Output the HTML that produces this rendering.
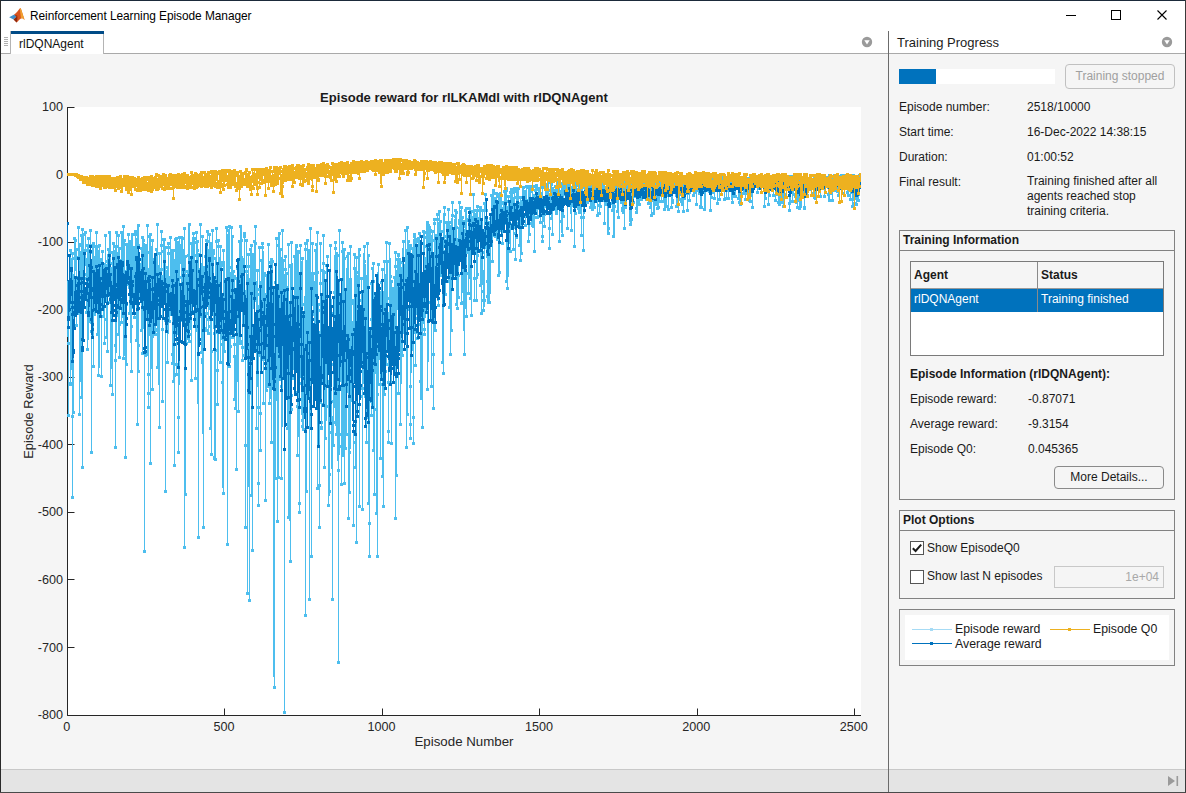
<!DOCTYPE html>
<html lang="en">
<head>
<meta charset="utf-8">
<title>Reinforcement Learning Episode Manager</title>
<style>
html,body{margin:0;padding:0;}
body{width:1186px;height:793px;overflow:hidden;background:#f5f5f5;font-family:"Liberation Sans",Arial,sans-serif;font-size:12px;color:#1a1a1a;position:relative;}
.abs{position:absolute;}
#win{position:absolute;left:0;top:0;width:1186px;height:793px;overflow:hidden;background:#f5f5f5;}
#titlebar{left:1px;top:1px;width:1184px;height:30px;background:#fff;}
#title{left:30px;top:9px;font-size:11.9px;color:#000;white-space:nowrap;letter-spacing:-0.05px;}
#tabstrip{left:1px;top:31px;width:1184px;height:22px;background:#fff;}
#tabline{left:1px;top:53px;width:1184px;height:1px;background:#a9a9a9;}
#tab{left:10px;top:31px;width:94px;height:23px;background:#fff;border-left:1px solid #b4b4b4;border-right:1px solid #b4b4b4;box-sizing:border-box;}
#tabtop{left:11px;top:31px;width:93px;height:3px;background:#004b87;}
#tabtxt{left:19px;top:37px;font-size:12px;color:#111;white-space:nowrap;}
#vsep{left:888px;top:31px;width:1px;height:762px;background:#6b6b6b;}
#tp{left:897px;top:35px;font-size:13px;color:#1c1c1c;white-space:nowrap;}
#statusL{left:1px;top:769px;width:887px;height:23px;background:#e4e4e4;border-top:1px solid #c8c8c8;box-sizing:border-box;}
#statusR{left:889px;top:769px;width:296px;height:23px;background:#e4e4e4;border-top:1px solid #c8c8c8;box-sizing:border-box;}
.lbl{position:absolute;font-size:12px;white-space:nowrap;color:#1a1a1a;}
.b{font-weight:bold;}
.panel{position:absolute;border:1px solid #828282;box-sizing:border-box;}
.phead{position:absolute;left:0;top:0;right:0;height:20px;border-bottom:1px solid #828282;box-sizing:border-box;}
.btn{position:absolute;border:1px solid #8a8a8a;border-radius:4px;box-sizing:border-box;text-align:center;font-size:12px;background:#f5f5f5;}
.cb{position:absolute;width:14px;height:14px;border:1px solid #555;background:#fff;box-sizing:border-box;}
</style>
</head>
<body>
<div id="win">
  <!-- title bar -->
  <div id="titlebar" class="abs"></div>
  <svg class="abs" style="left:8px;top:7px" width="20" height="18" viewBox="0 0 20 18">
    <path d="M1.2 10.2 L6.2 7.6 L8.6 9.8 L5.6 12.6 Z" fill="#3f8ecb"/>
    <path d="M6.2 7.6 C8.4 6.2 10.2 3.4 11.8 1.6 C12.4 1.0 12.8 1.2 13.2 2.4 L16.6 13.0 C15.2 11.6 14.2 11.0 13.0 11.6 C11.4 12.4 10.2 14.4 8.6 15.6 L5.6 12.6 L8.6 9.8 Z" fill="#d9541e"/>
    <path d="M11.8 1.6 C12.4 1.0 12.8 1.2 13.2 2.4 L16.6 13.0 C15.2 11.6 14.2 11.0 13.0 11.6 C12.6 8.6 12.2 4.8 11.8 1.6 Z" fill="#f0a030"/>
    <path d="M6.2 7.6 L8.6 9.8 L5.6 12.6 L8.6 15.6 C9.4 13.4 9.6 11.0 9.2 8.4 C8.2 8.6 7.2 8.2 6.2 7.6Z" fill="#8b2a12"/>
  </svg>
  <div id="title" class="abs">Reinforcement Learning Episode Manager</div>
  <!-- window controls -->
  <svg class="abs" style="left:1040px;top:0" width="146" height="31" viewBox="0 0 146 31">
    <path d="M26 15.5 H36" stroke="#000" stroke-width="1" fill="none"/>
    <rect x="71.500" y="10.500" width="9" height="9" stroke="#000" stroke-width="1" fill="none"/>
    <path d="M117.500 10.500 L126.500 19.500 M126.500 10.500 L117.500 19.500" stroke="#000" stroke-width="1.100" fill="none"/>
  </svg>

  <!-- tab strip -->
  <div id="tabstrip" class="abs"></div>
  <div id="tabline" class="abs"></div>
  <div id="tab" class="abs"></div>
  <div id="tabtop" class="abs"></div>
  <div id="tabtxt" class="abs">rlDQNAgent</div>
  <svg class="abs" style="left:3px;top:36px" width="6" height="12" viewBox="0 0 6 12">
    <path d="M1 1.500H5M1 3.500H5M1 5.500H5M1 7.500H5M1 9.500H5" stroke="#b0b0b0" stroke-width="1"/>
  </svg>
  <svg class="abs" style="left:861px;top:36px" width="12" height="12" viewBox="0 0 12 12">
    <circle cx="6" cy="6" r="5.200" fill="#9a9a9a"/><path d="M3.300 4.300 H8.700 L6 8.600 Z" fill="#fff"/>
  </svg>
  <svg class="abs" style="left:1161px;top:36px" width="12" height="12" viewBox="0 0 12 12">
    <circle cx="6" cy="6" r="5.200" fill="#9a9a9a"/><path d="M3.300 4.300 H8.700 L6 8.600 Z" fill="#fff"/>
  </svg>
  <div id="tp" class="abs">Training Progress</div>
  <div id="vsep" class="abs"></div>

  <!-- status bars -->
  <div id="statusL" class="abs"></div>
  <div id="statusR" class="abs"></div>
  <svg class="abs" style="left:1166px;top:774px" width="14" height="14" viewBox="0 0 14 14">
    <path d="M2 2 L9 7 L2 12 Z" fill="#9a9a9a"/><rect x="10.500" y="2" width="1.600" height="10" fill="#9a9a9a"/>
  </svg>

  <!-- chart -->
  <svg class="abs" style="left:0;top:54px" width="888" height="715" viewBox="0 54 888 715" font-family="Liberation Sans, Arial, sans-serif">
<rect x="67" y="107" width="794" height="609" fill="#fff"/>
<path d="M67.5 107 V715.5 H861" stroke="#262626" stroke-width="1" fill="none"/>
<path d="M67.5 107.5 h7 M67.5 174.5 h7 M67.5 242.5 h7 M67.5 309.5 h7 M67.5 377.5 h7 M67.5 444.5 h7 M67.5 512.5 h7 M67.5 579.5 h7 M67.5 647.5 h7 M67.5 715.5 h7 M67.5 715.5 v-7 M224.5 715.5 v-7 M382.5 715.5 v-7 M539.5 715.5 v-7 M697.5 715.5 v-7 M854.5 715.5 v-7" stroke="#262626" stroke-width="1" fill="none"/>
<g fill="none" stroke-width="1" shape-rendering="crispEdges">
<path id="episode-reward" stroke="#4dbeee" d="M67.5 222v115M67.5 342v3M67.5 414v3M68.5 222v3M68.5 283v3M68.5 288v129M69.5 249v3M69.5 283v38M69.5 342v3M69.5 382v4M69.5 414v3M70.5 249v137M71.5 249v6M71.5 258v112M71.5 382v4M71.5 415v3M71.5 496v3M72.5 252v247M73.5 237v3M73.5 252v3M73.5 257v3M73.5 274v140M73.5 415v3M73.5 496v3M74.5 237v63M74.5 351v3M74.5 411v3M75.5 237v34M75.5 287v3M75.5 296v3M75.5 324v3M76.5 239v3M76.5 248v79M77.5 226v3M77.5 248v3M77.5 256v3M77.5 276v39M77.5 324v3M78.5 226v71M78.5 312v3M78.5 413v3M79.5 226v3M79.5 243v173M80.5 234v3M80.5 243v4M80.5 251v131M80.5 396v3M80.5 413v3M81.5 228v3M81.5 234v165M81.5 466v3M82.5 228v241M83.5 228v3M83.5 233v71M83.5 466v3M84.5 231v5M84.5 249v42M84.5 301v3M85.5 231v35M85.5 273v3M85.5 277v3M85.5 282v3M85.5 311v3M86.5 231v3M86.5 244v3M86.5 249v3M86.5 258v56M86.5 348v3M87.5 237v3M87.5 244v107M88.5 237v103M88.5 348v3M89.5 229v3M89.5 237v3M89.5 244v3M89.5 249v74M90.5 229v95M90.5 330v3M90.5 451v3M91.5 229v3M91.5 244v3M91.5 250v4M91.5 287v167M92.5 242v91M92.5 365v3M92.5 451v3M93.5 242v126M94.5 242v6M94.5 256v60M94.5 365v3M95.5 231v3M95.5 245v61M95.5 313v3M96.5 231v45M96.5 302v3M96.5 333v3M97.5 231v3M97.5 245v91M97.5 374v3M98.5 244v4M98.5 250v127M99.5 244v124M99.5 374v3M100.5 244v3M100.5 258v54M100.5 375v3M101.5 250v3M101.5 258v120M102.5 250v46M102.5 315v3M102.5 375v3M103.5 250v3M103.5 263v55M103.5 342v3M104.5 234v3M104.5 263v82M105.5 234v67M105.5 318v3M105.5 336v3M105.5 342v3M106.5 234v3M106.5 260v3M106.5 264v5M106.5 270v69M106.5 350v3M107.5 248v3M107.5 254v99M108.5 231v3M108.5 248v33M108.5 301v3M108.5 350v3M109.5 231v73M109.5 384v3M110.5 231v156M111.5 251v3M111.5 262v3M111.5 267v102M111.5 384v3M111.5 393v3M112.5 242v3M112.5 251v145M113.5 242v46M113.5 393v3M114.5 242v6M114.5 250v38M114.5 344v3M114.5 359v3M114.5 446v3M115.5 231v3M115.5 245v204M116.5 231v122M116.5 359v3M116.5 446v3M117.5 231v6M117.5 245v3M117.5 252v65M117.5 333v3M118.5 234v102M118.5 356v3M119.5 234v3M119.5 247v112M120.5 231v3M120.5 247v3M120.5 259v30M120.5 321v5M120.5 356v3M121.5 231v93M122.5 225v3M122.5 231v87M122.5 321v3M122.5 357v3M123.5 225v135M124.5 225v3M124.5 239v117M124.5 357v3M124.5 456v3M125.5 239v3M125.5 243v3M125.5 270v3M125.5 283v3M125.5 287v172M126.5 243v123M126.5 456v3M127.5 233v3M127.5 243v43M127.5 303v3M127.5 363v3M128.5 233v56M128.5 312v3M129.5 233v3M129.5 240v75M130.5 240v103M130.5 370v3M131.5 233v140M132.5 233v76M132.5 325v3M132.5 370v3M133.5 233v3M133.5 246v50M133.5 306v3M133.5 316v3M134.5 230v6M134.5 246v73M135.5 230v49M135.5 284v3M135.5 316v3M135.5 339v3M136.5 230v6M136.5 238v104M136.5 423v3M137.5 224v202M138.5 224v149M138.5 423v3M139.5 224v3M139.5 244v3M139.5 252v48M139.5 344v3M139.5 370v3M140.5 247v3M140.5 263v24M140.5 294v6M140.5 329v3M141.5 236v3M141.5 247v85M141.5 352v3M142.5 236v119M143.5 236v93M143.5 352v3M143.5 550v3M144.5 239v3M144.5 243v310M145.5 244v113M145.5 550v3M146.5 224v3M146.5 244v76M146.5 353v4M147.5 224v132M147.5 373v3M147.5 392v3M147.5 406v3M148.5 224v3M148.5 235v3M148.5 251v3M148.5 268v141M149.5 233v103M149.5 373v3M149.5 392v3M149.5 406v3M149.5 462v3M150.5 233v232M151.5 233v3M151.5 239v3M151.5 246v123M151.5 388v3M151.5 462v3M152.5 239v152M153.5 239v3M153.5 258v80M153.5 388v3M154.5 258v6M154.5 272v64M155.5 248v3M155.5 261v75M156.5 223v3M156.5 248v74M156.5 328v4M156.5 333v3M156.5 366v3M157.5 223v146M158.5 223v3M158.5 252v3M158.5 265v120M158.5 426v3M159.5 252v177M160.5 230v3M160.5 244v3M160.5 252v3M160.5 268v42M160.5 426v3M161.5 230v67M161.5 305v3M161.5 328v3M161.5 400v3M162.5 230v3M162.5 238v3M162.5 244v3M162.5 250v3M162.5 268v3M162.5 275v128M163.5 238v80M163.5 328v3M163.5 400v3M164.5 238v60M164.5 319v3M164.5 490v3M165.5 238v3M165.5 246v247M166.5 246v3M166.5 266v3M166.5 270v39M166.5 319v3M166.5 361v3M166.5 490v3M167.5 242v3M167.5 246v3M167.5 252v3M167.5 266v98M168.5 242v92M168.5 361v3M169.5 236v3M169.5 242v3M169.5 246v3M169.5 252v3M169.5 276v47M170.5 236v80M170.5 320v3M171.5 236v3M171.5 249v61M171.5 313v3M171.5 353v3M171.5 362v3M172.5 249v116M172.5 380v3M173.5 249v134M173.5 464v3M174.5 238v3M174.5 249v3M174.5 259v208M175.5 237v100M175.5 363v3M175.5 373v4M175.5 464v3M176.5 237v139M177.5 237v3M177.5 241v94M177.5 363v3M177.5 373v3M177.5 416v3M177.5 451v3M178.5 236v3M178.5 241v213M179.5 236v149M179.5 416v3M179.5 451v3M180.5 236v3M180.5 244v20M180.5 276v3M181.5 236v65M181.5 319v3M182.5 236v86M183.5 227v3M183.5 237v3M183.5 249v78M183.5 546v3M184.5 227v322M185.5 227v3M185.5 255v241M185.5 546v3M186.5 255v3M186.5 270v3M186.5 274v71M186.5 493v3M187.5 254v3M187.5 270v70M187.5 342v3M188.5 223v77M188.5 314v3M188.5 333v3M188.5 337v6M189.5 223v120M190.5 223v3M190.5 242v3M190.5 258v72M190.5 333v3M190.5 340v3M190.5 379v3M191.5 242v140M192.5 232v3M192.5 237v76M192.5 379v3M193.5 232v65M193.5 300v3M193.5 310v3M194.5 232v3M194.5 237v66M194.5 377v3M195.5 231v3M195.5 237v3M195.5 241v3M195.5 254v3M195.5 263v117M196.5 231v101M196.5 377v3M197.5 231v3M197.5 240v164M197.5 536v3M198.5 240v3M198.5 249v3M198.5 253v286M199.5 223v3M199.5 253v3M199.5 268v3M199.5 276v3M199.5 290v24M199.5 315v3M199.5 536v3M200.5 223v95M200.5 351v3M201.5 223v3M201.5 235v3M201.5 263v91M201.5 358v6M202.5 235v199M202.5 526v3M203.5 235v3M203.5 266v263M204.5 255v3M204.5 266v64M204.5 526v3M205.5 239v3M205.5 255v39M205.5 300v3M205.5 312v3M205.5 327v5M206.5 230v3M206.5 239v93M207.5 230v73M207.5 312v3M207.5 318v3M207.5 329v6M208.5 230v6M208.5 240v3M208.5 249v86M209.5 233v77M209.5 318v3M209.5 325v3M209.5 332v3M209.5 427v3M210.5 233v3M210.5 242v188M210.5 453v3M211.5 229v3M211.5 242v214M212.5 229v59M212.5 350v3M212.5 453v3M213.5 229v3M213.5 249v80M213.5 332v3M213.5 456v4M214.5 249v6M214.5 257v3M214.5 285v3M214.5 292v169M215.5 227v3M215.5 240v3M215.5 257v204M216.5 227v101M216.5 331v3M216.5 349v3M216.5 369v3M216.5 403v3M216.5 458v3M217.5 227v3M217.5 239v4M217.5 245v3M217.5 283v123M218.5 239v122M218.5 369v3M218.5 403v3M219.5 239v3M219.5 245v3M219.5 257v65M219.5 361v3M220.5 245v119M221.5 245v3M221.5 261v79M221.5 343v3M221.5 361v3M221.5 381v3M222.5 249v3M222.5 261v6M222.5 316v172M222.5 492v3M223.5 249v246M224.5 249v3M224.5 261v92M224.5 492v3M225.5 226v3M225.5 284v3M225.5 292v42M225.5 337v3M225.5 350v3M226.5 226v114M226.5 543v3M227.5 226v6M227.5 234v312M228.5 225v3M228.5 229v96M228.5 365v3M228.5 543v3M229.5 225v143M230.5 225v4M230.5 266v3M230.5 272v91M230.5 365v3M231.5 226v100M231.5 336v3M231.5 345v3M232.5 226v3M232.5 235v104M233.5 235v3M233.5 270v48M233.5 336v3M233.5 343v3M233.5 355v3M233.5 398v3M234.5 270v3M234.5 275v126M234.5 407v3M235.5 275v5M235.5 308v3M235.5 343v3M235.5 355v55M235.5 468v3M236.5 267v3M236.5 277v194M237.5 267v115M237.5 410v3M237.5 468v3M238.5 240v3M238.5 264v6M238.5 292v121M239.5 225v3M239.5 240v105M239.5 410v3M240.5 225v120M241.5 225v81M241.5 340v5M241.5 346v3M241.5 359v3M242.5 239v3M242.5 256v106M243.5 232v6M243.5 258v49M243.5 346v3M243.5 354v3M243.5 359v3M244.5 232v125M244.5 444v3M244.5 526v3M245.5 232v6M245.5 239v3M245.5 270v3M245.5 290v239M246.5 239v110M246.5 350v3M246.5 444v3M246.5 526v3M246.5 592v3M247.5 239v3M247.5 253v3M247.5 265v3M247.5 270v3M247.5 274v321M248.5 253v234M248.5 592v3M248.5 599v3M249.5 248v3M249.5 253v3M249.5 265v3M249.5 278v324M250.5 244v3M250.5 248v147M250.5 494v3M250.5 599v3M251.5 244v253M251.5 549v3M252.5 244v3M252.5 253v299M253.5 240v3M253.5 253v56M253.5 338v3M253.5 549v3M254.5 225v3M254.5 240v60M254.5 304v5M255.5 225v77M255.5 427v3M256.5 225v3M256.5 242v3M256.5 269v3M256.5 281v149M257.5 269v118M257.5 406v3M257.5 427v3M257.5 482v3M257.5 504v3M258.5 246v3M258.5 269v3M258.5 288v3M258.5 293v3M258.5 305v202M259.5 246v111M259.5 406v3M259.5 412v3M259.5 449v3M259.5 482v3M259.5 504v3M260.5 246v3M260.5 259v3M260.5 281v171M261.5 242v3M261.5 246v3M261.5 259v77M261.5 358v3M261.5 412v3M261.5 449v3M262.5 242v119M262.5 402v3M263.5 242v3M263.5 246v3M263.5 251v154M264.5 272v89M264.5 402v3M264.5 499v3M265.5 272v5M265.5 293v209M266.5 274v118M266.5 499v3M267.5 243v3M267.5 274v3M267.5 291v3M267.5 306v3M267.5 313v75M267.5 389v3M268.5 243v145M268.5 402v3M269.5 243v3M269.5 261v3M269.5 274v131M270.5 258v141M270.5 402v3M270.5 441v3M271.5 258v186M272.5 258v129M272.5 441v3M273.5 260v3M273.5 286v3M273.5 293v384M273.5 686v3M274.5 281v3M274.5 286v403M275.5 237v3M275.5 281v199M275.5 686v3M276.5 237v164M276.5 477v3M276.5 520v3M277.5 237v3M277.5 244v3M277.5 284v239M278.5 232v247M278.5 520v3M279.5 232v149M279.5 476v3M280.5 232v3M280.5 248v128M280.5 378v3M280.5 385v3M280.5 477v3M281.5 229v3M281.5 248v3M281.5 257v223M282.5 229v198M282.5 477v3M283.5 229v3M283.5 259v104M283.5 365v3M283.5 711v3M284.5 255v3M284.5 259v3M284.5 268v3M284.5 274v440M285.5 255v67M285.5 327v3M285.5 358v3M285.5 365v3M285.5 387v3M285.5 711v3M286.5 255v3M286.5 268v3M286.5 272v118M286.5 427v3M287.5 243v3M287.5 272v3M287.5 286v144M287.5 516v3M288.5 243v276M289.5 243v3M289.5 264v4M289.5 302v219M289.5 560v3M290.5 241v3M290.5 264v299M291.5 241v170M291.5 560v3M292.5 241v3M292.5 263v117M292.5 394v3M292.5 408v3M293.5 255v3M293.5 310v60M293.5 377v3M294.5 255v98M294.5 358v3M294.5 367v3M294.5 391v3M295.5 244v150M296.5 244v110M296.5 391v3M296.5 405v3M296.5 454v3M297.5 244v4M297.5 250v207M298.5 250v187M298.5 454v3M298.5 502v3M298.5 511v3M299.5 244v3M299.5 250v4M299.5 272v242M300.5 244v134M300.5 382v3M300.5 502v3M300.5 511v3M301.5 244v3M301.5 257v3M301.5 261v154M301.5 419v3M301.5 425v3M302.5 257v174M303.5 257v3M303.5 303v3M303.5 317v3M303.5 333v3M303.5 338v93M304.5 242v3M304.5 248v3M304.5 296v83M304.5 428v3M304.5 614v3M305.5 242v375M306.5 239v6M306.5 248v3M306.5 260v233M306.5 614v3M307.5 239v155M307.5 416v3M307.5 490v3M308.5 239v3M308.5 249v145M308.5 598v3M309.5 227v3M309.5 249v352M310.5 227v201M310.5 555v3M310.5 598v3M311.5 227v3M311.5 242v3M311.5 272v286M312.5 242v64M312.5 313v3M312.5 332v3M312.5 555v3M313.5 242v3M313.5 272v44M313.5 334v3M313.5 369v3M314.5 249v3M314.5 272v3M314.5 281v91M314.5 387v3M315.5 243v3M315.5 249v141M316.5 231v3M316.5 243v130M316.5 387v3M316.5 487v3M317.5 231v259M318.5 231v3M318.5 271v3M318.5 303v53M318.5 401v3M318.5 484v6M318.5 526v3M319.5 242v3M319.5 282v3M319.5 303v3M319.5 309v3M319.5 331v198M320.5 242v150M320.5 401v3M320.5 421v3M320.5 426v4M320.5 484v3M320.5 526v3M321.5 242v3M321.5 269v3M321.5 282v3M321.5 323v3M321.5 337v3M321.5 343v3M321.5 362v68M322.5 234v3M322.5 262v3M322.5 269v114M322.5 403v3M322.5 421v3M322.5 426v4M323.5 234v172M323.5 466v3M324.5 234v3M324.5 262v3M324.5 270v199M325.5 264v3M325.5 271v3M325.5 307v133M325.5 466v3M326.5 255v3M326.5 264v157M326.5 437v3M327.5 255v126M327.5 385v3M327.5 405v3M327.5 504v3M328.5 255v3M328.5 363v3M328.5 372v3M328.5 380v127M329.5 244v3M329.5 299v6M329.5 318v3M329.5 324v172M329.5 504v3M330.5 244v81M330.5 363v3M330.5 394v3M330.5 400v3M330.5 431v3M330.5 473v3M330.5 490v3M331.5 244v3M331.5 299v6M331.5 318v151M331.5 598v3M332.5 312v3M332.5 363v3M332.5 400v3M332.5 416v185M333.5 291v3M333.5 312v135M333.5 598v3M334.5 241v3M334.5 247v3M334.5 255v153M334.5 421v3M334.5 444v3M335.5 241v185M335.5 433v3M336.5 241v3M336.5 247v3M336.5 252v184M337.5 252v209M337.5 469v3M337.5 661v3M338.5 229v3M338.5 254v3M338.5 297v367M339.5 229v226M339.5 469v3M339.5 661v3M340.5 229v3M340.5 307v3M340.5 315v3M340.5 319v63M340.5 433v3M340.5 445v3M340.5 483v3M341.5 241v3M341.5 250v3M341.5 307v179M342.5 241v216M342.5 483v3M343.5 241v3M343.5 248v209M343.5 482v3M344.5 248v237M345.5 248v3M345.5 257v3M345.5 288v162M345.5 482v3M346.5 255v3M346.5 268v168M346.5 447v3M347.5 252v141M347.5 433v3M347.5 517v3M348.5 252v268M349.5 245v3M349.5 252v3M349.5 278v216M349.5 517v3M350.5 245v204M350.5 451v3M350.5 491v3M351.5 245v3M351.5 278v124M352.5 299v6M352.5 321v75M352.5 399v3M352.5 524v3M353.5 253v3M353.5 267v3M353.5 299v228M354.5 253v129M354.5 441v3M354.5 466v3M354.5 524v3M355.5 253v6M355.5 267v202M355.5 541v3M356.5 256v288M357.5 256v3M357.5 271v3M357.5 275v98M357.5 541v3M358.5 248v106M358.5 369v4M358.5 505v3M359.5 248v260M360.5 248v3M360.5 254v3M360.5 277v3M360.5 299v3M360.5 311v3M360.5 315v83M360.5 505v3M361.5 277v56M361.5 349v4M361.5 359v3M361.5 387v3M361.5 395v3M361.5 508v3M362.5 277v3M362.5 295v3M362.5 311v3M362.5 319v3M362.5 332v179M363.5 245v3M363.5 253v131M363.5 387v3M363.5 508v3M364.5 245v116M364.5 381v3M364.5 395v3M365.5 245v3M365.5 260v3M365.5 264v134M365.5 441v3M366.5 242v3M366.5 275v169M367.5 242v177M367.5 441v3M367.5 502v3M368.5 242v3M368.5 254v251M368.5 522v3M368.5 555v3M369.5 254v3M369.5 330v228M370.5 282v3M370.5 318v3M370.5 330v73M370.5 414v3M370.5 522v3M370.5 555v3M371.5 267v3M371.5 282v135M372.5 262v3M372.5 267v118M372.5 414v3M372.5 449v3M373.5 262v190M373.5 493v3M374.5 262v3M374.5 280v3M374.5 294v3M374.5 308v3M374.5 312v184M375.5 294v80M375.5 408v3M375.5 493v3M375.5 512v3M376.5 275v3M376.5 294v3M376.5 308v3M376.5 317v198M376.5 555v3M377.5 263v3M377.5 272v286M378.5 263v123M378.5 393v3M378.5 555v3M379.5 263v3M379.5 287v73M379.5 383v3M379.5 457v3M380.5 281v3M380.5 287v3M380.5 291v169M381.5 268v3M381.5 281v92M381.5 383v3M381.5 457v3M381.5 475v3M382.5 268v210M382.5 505v3M383.5 260v3M383.5 268v3M383.5 291v217M384.5 260v136M384.5 505v3M385.5 241v3M385.5 260v3M385.5 274v99M385.5 393v3M386.5 241v125M386.5 370v3M387.5 241v3M387.5 260v83M387.5 363v3M387.5 381v3M387.5 430v3M387.5 441v3M388.5 242v3M388.5 260v3M388.5 297v3M388.5 312v132M389.5 242v124M389.5 381v3M389.5 430v3M389.5 441v3M390.5 242v3M390.5 258v128M390.5 442v3M391.5 275v3M391.5 280v165M392.5 280v3M392.5 287v76M392.5 442v3M393.5 276v3M393.5 287v63M393.5 355v3M393.5 360v3M394.5 251v3M394.5 265v3M394.5 276v82M394.5 517v3M395.5 251v269M396.5 251v3M396.5 258v3M396.5 265v3M396.5 270v207M396.5 517v3M397.5 253v4M397.5 258v52M397.5 348v3M397.5 392v3M397.5 474v3M398.5 253v142M399.5 253v4M399.5 258v93M399.5 392v3M399.5 423v3M400.5 258v168M401.5 261v3M401.5 267v117M401.5 423v3M402.5 240v3M402.5 248v109M403.5 240v94M403.5 354v3M404.5 229v3M404.5 240v3M404.5 264v70M405.5 229v77M405.5 319v3M405.5 328v3M405.5 446v3M406.5 226v6M406.5 249v200M407.5 226v190M407.5 446v3M408.5 226v3M408.5 240v36M408.5 292v3M408.5 298v3M408.5 308v3M408.5 413v3M409.5 240v3M409.5 244v57M409.5 385v3M409.5 423v3M409.5 437v3M410.5 244v196M411.5 244v6M411.5 255v3M411.5 261v112M411.5 385v3M411.5 423v3M411.5 437v3M412.5 247v104M412.5 416v3M412.5 442v3M413.5 233v5M413.5 239v206M414.5 233v101M414.5 364v3M414.5 416v3M414.5 442v3M415.5 233v134M416.5 238v77M416.5 317v3M416.5 331v3M416.5 337v3M416.5 364v3M417.5 237v6M417.5 244v96M418.5 232v3M418.5 237v74M418.5 317v3M418.5 337v3M419.5 232v71M419.5 323v3M419.5 380v3M420.5 232v3M420.5 268v3M420.5 274v126M421.5 274v3M421.5 282v118M421.5 426v3M422.5 230v3M422.5 242v3M422.5 282v3M422.5 295v134M423.5 230v94M423.5 328v3M423.5 333v3M423.5 426v3M424.5 230v106M425.5 231v3M425.5 236v3M425.5 245v3M425.5 257v61M425.5 328v3M425.5 333v3M426.5 221v49M426.5 305v3M426.5 310v3M426.5 388v3M427.5 221v170M428.5 221v141M428.5 388v3M429.5 224v27M429.5 259v4M429.5 301v3M430.5 226v37M430.5 295v3M430.5 385v3M431.5 229v4M431.5 235v153M432.5 230v81M432.5 353v3M432.5 385v3M432.5 407v3M433.5 218v3M433.5 222v3M433.5 230v3M433.5 239v3M433.5 258v152M434.5 218v114M434.5 353v3M434.5 407v3M435.5 218v3M435.5 222v3M435.5 234v98M436.5 213v3M436.5 218v3M436.5 234v64M436.5 329v3M437.5 213v88M437.5 304v3M438.5 210v6M438.5 218v3M438.5 222v85M439.5 210v36M439.5 256v3M439.5 274v3M439.5 304v3M440.5 210v3M440.5 220v57M441.5 220v3M441.5 230v34M441.5 274v3M441.5 361v3M442.5 230v3M442.5 241v4M442.5 246v118M442.5 372v3M443.5 206v3M443.5 213v162M444.5 206v40M444.5 250v3M444.5 263v3M444.5 293v5M444.5 372v3M445.5 206v3M445.5 213v3M445.5 221v3M445.5 235v3M445.5 239v57M446.5 221v37M446.5 263v3M446.5 293v3M447.5 208v3M447.5 221v37M447.5 280v3M448.5 208v75M448.5 306v3M449.5 208v3M449.5 221v88M449.5 353v3M450.5 221v3M450.5 225v131M451.5 201v3M451.5 214v3M451.5 218v114M451.5 353v3M452.5 201v52M452.5 329v3M453.5 201v3M453.5 214v3M453.5 230v23M453.5 270v6M454.5 209v3M454.5 215v3M454.5 219v57M455.5 209v59M455.5 270v6M455.5 303v3M456.5 209v97M456.5 307v3M457.5 211v3M457.5 226v3M457.5 238v72M458.5 201v3M458.5 219v6M458.5 227v72M458.5 307v3M459.5 201v49M459.5 253v3M459.5 274v3M459.5 296v3M460.5 201v3M460.5 206v3M460.5 210v46M460.5 302v3M461.5 206v99M462.5 206v3M462.5 216v77M462.5 301v4M463.5 216v3M463.5 220v111M463.5 353v3M464.5 209v3M464.5 220v3M464.5 225v3M464.5 229v127M465.5 207v102M465.5 315v3M465.5 353v3M466.5 207v111M467.5 207v3M467.5 218v4M467.5 230v24M467.5 272v3M467.5 292v3M467.5 315v3M468.5 207v3M468.5 215v80M469.5 207v72M469.5 292v3M469.5 297v3M470.5 207v93M470.5 314v3M471.5 210v107M472.5 193v3M472.5 210v3M472.5 216v25M472.5 249v3M472.5 314v3M473.5 193v59M473.5 277v3M473.5 299v3M474.5 193v3M474.5 209v93M475.5 209v3M475.5 213v42M475.5 277v3M475.5 299v3M476.5 205v3M476.5 209v93M477.5 205v74M477.5 299v3M478.5 205v3M478.5 209v3M478.5 217v18M478.5 254v3M478.5 273v3M479.5 206v29M479.5 284v3M480.5 206v81M480.5 312v3M481.5 206v6M481.5 219v96M482.5 209v76M482.5 290v3M482.5 299v3M482.5 309v6M483.5 202v3M483.5 209v3M483.5 231v3M483.5 246v3M483.5 251v3M483.5 270v42M484.5 193v3M484.5 202v105M484.5 309v3M485.5 193v19M485.5 219v6M485.5 246v3M485.5 299v3M486.5 193v3M486.5 205v53M486.5 280v3M486.5 295v3M487.5 209v3M487.5 219v85M488.5 221v3M488.5 225v79M489.5 217v3M489.5 221v83M490.5 194v3M490.5 217v77M490.5 301v3M491.5 194v52M491.5 260v3M492.5 189v74M493.5 189v27M493.5 219v3M493.5 234v3M493.5 260v3M494.5 189v6M494.5 197v41M495.5 192v3M495.5 197v41M496.5 192v49M497.5 192v6M497.5 201v3M497.5 205v36M497.5 274v3M498.5 193v84M499.5 192v85M500.5 192v40M500.5 271v3M501.5 192v39M501.5 242v3M502.5 201v4M502.5 207v3M502.5 213v32M503.5 190v3M503.5 201v28M503.5 242v3M504.5 190v35M505.5 187v38M505.5 280v3M506.5 187v96M506.5 287v3M507.5 187v5M507.5 195v3M507.5 200v3M507.5 206v84M508.5 195v82M508.5 287v3M509.5 191v3M509.5 195v3M509.5 204v40M509.5 249v4M510.5 188v65M511.5 188v27M511.5 223v3M511.5 250v3M512.5 188v40M512.5 248v3M513.5 187v7M513.5 197v54M514.5 187v42M514.5 232v3M514.5 248v3M514.5 258v3M515.5 187v6M515.5 196v3M515.5 205v56M516.5 187v52M516.5 258v3M517.5 187v34M517.5 222v3M517.5 236v3M518.5 187v38M518.5 244v3M519.5 187v3M519.5 196v3M519.5 202v45M519.5 259v3M520.5 196v66M521.5 196v3M521.5 200v55M521.5 259v3M522.5 186v21M522.5 210v3M522.5 220v3M522.5 252v3M523.5 186v37M524.5 186v3M524.5 190v16M524.5 220v3M524.5 224v3M525.5 185v3M525.5 190v37M526.5 185v33M526.5 224v3M527.5 185v4M527.5 199v19M527.5 240v3M528.5 185v58M529.5 185v51M529.5 240v3M530.5 185v14M530.5 203v3M530.5 213v4M530.5 222v3M530.5 233v3M531.5 185v8M531.5 198v29M532.5 185v43M533.5 185v3M533.5 194v34M533.5 250v3M534.5 185v3M534.5 189v3M534.5 194v59M535.5 184v31M535.5 216v3M535.5 250v3M536.5 184v28M536.5 216v3M537.5 184v7M537.5 192v27M538.5 187v14M538.5 202v3M538.5 207v3M538.5 215v4M539.5 187v31M539.5 221v3M540.5 189v35M541.5 186v3M541.5 192v24M541.5 221v3M541.5 235v3M541.5 240v3M542.5 186v57M543.5 186v3M543.5 196v26M543.5 225v3M543.5 235v3M543.5 240v3M544.5 183v3M544.5 187v3M544.5 196v32M545.5 183v25M545.5 213v3M545.5 225v3M546.5 183v25M547.5 181v3M547.5 188v13M547.5 204v5M548.5 181v28M548.5 227v3M548.5 247v3M549.5 181v3M549.5 189v3M549.5 195v55M550.5 183v3M550.5 189v20M550.5 217v3M550.5 227v3M550.5 247v3M551.5 183v37M551.5 233v3M552.5 183v3M552.5 187v49M553.5 187v24M553.5 233v3M554.5 185v3M554.5 189v15M554.5 207v4M555.5 185v30M556.5 181v34M557.5 181v20M557.5 210v5M558.5 181v21M558.5 240v3M559.5 187v56M560.5 182v3M560.5 190v15M560.5 206v3M560.5 220v3M560.5 240v3M561.5 182v51M561.5 234v3M562.5 182v55M563.5 183v35M563.5 234v3M564.5 183v13M564.5 202v3M564.5 215v3M565.5 185v20M566.5 185v21M566.5 227v3M567.5 182v11M567.5 196v34M568.5 180v19M568.5 202v4M568.5 227v3M569.5 180v22M570.5 180v3M570.5 186v28M570.5 229v3M571.5 186v46M572.5 183v24M572.5 229v3M573.5 183v17M573.5 204v3M573.5 245v3M574.5 181v5M574.5 187v61M575.5 181v34M575.5 245v3M576.5 181v20M576.5 204v3M576.5 212v3M577.5 184v3M577.5 188v22M578.5 184v30M579.5 182v32M580.5 182v32M580.5 216v3M580.5 234v3M581.5 180v57M582.5 180v27M582.5 216v3M582.5 234v3M582.5 249v3M583.5 180v3M583.5 185v4M583.5 199v53M584.5 180v4M584.5 186v28M584.5 216v3M584.5 249v3M585.5 180v17M585.5 199v3M585.5 204v3M586.5 180v17M586.5 201v3M587.5 181v23M588.5 181v18M588.5 201v3M589.5 181v18M589.5 206v3M590.5 182v27M591.5 179v3M591.5 183v28M592.5 179v32M593.5 179v32M594.5 181v5M594.5 189v20M595.5 179v20M595.5 206v3M596.5 179v20M596.5 214v3M597.5 179v4M597.5 184v33M598.5 180v18M598.5 204v3M598.5 212v5M599.5 180v5M599.5 190v25M600.5 180v28M600.5 212v3M601.5 179v13M601.5 197v3M601.5 205v3M602.5 179v15M602.5 199v3M603.5 179v5M603.5 185v17M603.5 222v3M604.5 181v44M605.5 178v6M605.5 187v19M605.5 222v3M606.5 178v28M607.5 178v3M607.5 184v51M608.5 180v3M608.5 184v51M609.5 180v16M609.5 227v3M609.5 232v3M610.5 180v16M610.5 202v3M611.5 181v24M611.5 209v3M612.5 178v6M612.5 187v4M612.5 192v20M612.5 235v3M613.5 178v60M614.5 178v60M615.5 180v20M615.5 205v3M616.5 180v23M616.5 210v3M617.5 180v3M617.5 184v29M617.5 216v3M618.5 180v39M619.5 179v21M619.5 216v3M620.5 179v18M620.5 201v3M621.5 178v26M621.5 207v5M622.5 178v36M623.5 178v36M623.5 227v3M624.5 178v52M625.5 178v3M625.5 182v27M625.5 227v3M626.5 177v19M626.5 201v3M626.5 206v3M627.5 177v19M628.5 177v17M629.5 182v40M629.5 223v3M630.5 178v3M630.5 182v3M630.5 187v39M631.5 178v48M632.5 178v3M632.5 185v12M632.5 201v3M632.5 218v3M633.5 185v19M634.5 179v6M634.5 186v12M634.5 201v3M635.5 179v10M635.5 191v3M635.5 195v3M635.5 207v3M635.5 211v3M636.5 179v35M637.5 182v8M637.5 193v21M638.5 183v23M639.5 177v29M640.5 177v24M640.5 203v3M641.5 177v24M642.5 179v16M642.5 198v3M643.5 179v11M643.5 191v4M644.5 179v16M645.5 179v16M645.5 198v3M646.5 179v3M646.5 183v18M647.5 183v14M647.5 198v3M647.5 202v3M648.5 178v3M648.5 183v3M648.5 187v18M649.5 178v21M649.5 202v3M649.5 206v3M650.5 178v31M650.5 214v3M651.5 181v36M652.5 178v17M652.5 199v3M652.5 212v5M653.5 178v37M654.5 178v5M654.5 187v28M655.5 180v15M655.5 200v6M656.5 180v26M656.5 207v3M657.5 180v30M658.5 181v29M659.5 180v23M659.5 206v3M660.5 180v11M660.5 194v3M660.5 200v3M661.5 180v23M662.5 184v13M662.5 200v3M663.5 179v24M663.5 208v3M664.5 179v32M665.5 179v32M666.5 181v4M666.5 188v20M667.5 181v11M667.5 194v3M667.5 205v6M668.5 181v30M669.5 178v16M669.5 208v3M670.5 178v16M670.5 206v3M671.5 178v31M672.5 182v22M672.5 206v3M673.5 179v11M673.5 199v5M674.5 178v8M674.5 187v3M675.5 178v8M675.5 187v3M675.5 194v3M675.5 205v3M676.5 178v30M677.5 179v29M677.5 210v3M678.5 179v34M679.5 178v23M679.5 210v3M680.5 178v18M680.5 198v5M681.5 178v28M682.5 178v28M682.5 210v3M683.5 182v31M684.5 176v24M684.5 210v3M685.5 176v19M685.5 197v3M686.5 176v19M686.5 209v3M687.5 180v32M688.5 180v15M688.5 199v3M688.5 209v3M689.5 179v23M690.5 178v9M690.5 189v5M690.5 199v3M691.5 178v14M692.5 178v14M692.5 194v3M693.5 179v3M693.5 185v12M694.5 179v18M695.5 179v15M695.5 203v3M696.5 179v27M697.5 176v16M697.5 203v3M698.5 176v11M698.5 188v7M699.5 176v19M699.5 205v4M700.5 177v32M701.5 177v32M702.5 177v15M702.5 206v3M703.5 176v16M703.5 208v3M704.5 176v35M705.5 176v35M706.5 178v14M707.5 178v10M707.5 189v3M708.5 179v3M708.5 183v10M709.5 182v11M709.5 209v3M710.5 182v30M711.5 178v21M711.5 209v3M712.5 178v10M712.5 191v3M712.5 196v3M713.5 177v17M713.5 197v3M714.5 177v23M715.5 177v15M715.5 197v3M716.5 177v15M716.5 202v3M717.5 177v28M718.5 177v15M718.5 198v3M718.5 202v3M719.5 178v23M720.5 178v12M720.5 198v3M721.5 176v15M722.5 176v15M723.5 176v16M723.5 198v3M724.5 177v24M725.5 179v12M725.5 197v4M726.5 176v24M727.5 176v16M727.5 197v3M728.5 176v24M729.5 178v14M729.5 197v3M730.5 178v11M731.5 178v22M731.5 201v3M732.5 179v25M733.5 180v9M733.5 195v3M733.5 201v3M734.5 179v19M735.5 178v20M736.5 178v12M736.5 195v3M737.5 178v12M737.5 197v3M738.5 177v23M738.5 201v3M739.5 177v29M740.5 177v29M741.5 177v12M741.5 195v3M741.5 203v3M742.5 177v14M742.5 192v3M743.5 176v19M744.5 176v19M744.5 198v3M745.5 176v25M746.5 176v19M746.5 198v3M747.5 177v11M748.5 177v21M748.5 199v3M749.5 177v26M750.5 178v3M750.5 183v20M751.5 178v19M751.5 200v3M751.5 206v3M752.5 177v32M753.5 177v13M753.5 206v3M754.5 177v11M755.5 178v10M756.5 178v10M756.5 191v3M757.5 177v17M758.5 177v13M758.5 191v3M759.5 177v13M760.5 177v12M761.5 177v12M762.5 176v12M763.5 176v11M763.5 205v3M764.5 176v32M765.5 177v23M765.5 205v3M766.5 177v8M766.5 197v3M767.5 177v8M767.5 203v3M768.5 178v28M769.5 176v21M769.5 203v3M770.5 176v11M770.5 194v3M771.5 176v11M772.5 175v12M772.5 194v3M773.5 175v22M774.5 175v14M774.5 194v3M774.5 199v3M775.5 176v4M775.5 181v21M776.5 181v10M776.5 193v3M776.5 199v3M777.5 175v21M777.5 201v3M778.5 175v31M779.5 175v3M779.5 179v27M780.5 177v29M781.5 177v14M781.5 201v3M782.5 177v27M782.5 205v3M783.5 177v31M784.5 177v22M784.5 205v3M785.5 180v8M785.5 193v4M786.5 179v9M787.5 177v14M788.5 177v14M788.5 202v3M788.5 209v3M789.5 175v5M789.5 184v28M790.5 175v30M790.5 209v3M791.5 175v13M791.5 200v3M792.5 175v28M793.5 175v21M793.5 200v3M794.5 175v9M794.5 193v5M795.5 177v21M795.5 201v3M796.5 175v29M796.5 206v3M797.5 175v34M798.5 175v3M798.5 180v22M798.5 206v4M799.5 180v30M800.5 176v3M800.5 180v30M801.5 176v32M802.5 176v21M803.5 176v21M803.5 206v4M804.5 176v34M805.5 176v10M805.5 206v4M806.5 176v10M806.5 194v3M807.5 178v19M808.5 178v9M808.5 194v3M809.5 178v13M810.5 179v12M810.5 194v3M811.5 180v17M812.5 180v7M812.5 192v5M813.5 176v3M813.5 180v15M813.5 196v3M814.5 176v24M815.5 176v3M815.5 180v20M816.5 175v3M816.5 180v20M817.5 175v14M817.5 195v3M818.5 175v14M819.5 175v14M819.5 195v3M820.5 176v22M821.5 176v10M821.5 195v3M822.5 176v11M823.5 176v11M823.5 195v3M824.5 176v22M825.5 176v8M825.5 195v3M826.5 176v11M827.5 176v13M827.5 193v3M828.5 174v28M829.5 174v28M830.5 174v21M830.5 199v3M831.5 175v11M831.5 188v3M831.5 192v3M831.5 199v3M832.5 175v27M833.5 174v12M833.5 188v3M833.5 199v3M834.5 174v18M835.5 174v18M836.5 176v17M837.5 176v17M837.5 194v3M838.5 175v6M838.5 182v15M839.5 175v18M839.5 194v3M840.5 174v12M841.5 174v13M841.5 192v3M842.5 174v21M843.5 174v15M843.5 192v3M844.5 174v11M845.5 174v11M846.5 176v9M846.5 191v3M847.5 176v21M848.5 175v22M849.5 175v15M849.5 194v3M849.5 198v3M850.5 175v26M851.5 176v14M851.5 191v3M851.5 198v3M851.5 205v3M852.5 174v34M853.5 174v27M853.5 202v6M854.5 174v31M855.5 176v24M855.5 202v4M856.5 176v30M857.5 176v26M857.5 203v3M858.5 174v28M859.5 174v22M859.5 199v3M860.5 174v3M860.5 179v5"/>
<path id="average-reward" stroke="#0072bd" d="M67.5 222v59M67.5 316v5M67.5 326v3M68.5 222v3M68.5 254v3M68.5 280v49M69.5 254v58M69.5 316v5M69.5 326v3M70.5 254v3M70.5 267v5M70.5 278v26M70.5 308v3M71.5 267v29M71.5 301v3M71.5 306v3M71.5 313v3M71.5 360v3M72.5 267v5M72.5 280v83M73.5 301v3M73.5 306v3M73.5 311v5M73.5 319v39M73.5 360v3M74.5 276v3M74.5 291v39M74.5 349v5M75.5 276v41M75.5 327v3M76.5 276v3M76.5 284v3M76.5 290v27M77.5 257v3M77.5 277v3M77.5 282v33M78.5 257v56M79.5 257v3M79.5 271v42M80.5 277v3M80.5 282v3M80.5 290v3M80.5 296v3M80.5 301v13M81.5 277v37M81.5 338v3M81.5 346v6M82.5 277v3M82.5 281v3M82.5 290v3M82.5 294v58M83.5 252v3M83.5 270v72M83.5 346v6M84.5 252v57M84.5 339v3M85.5 252v3M85.5 282v3M85.5 287v14M85.5 306v3M86.5 278v3M86.5 282v19M87.5 278v17M87.5 299v3M87.5 311v6M88.5 264v3M88.5 277v4M88.5 283v5M88.5 292v25M89.5 245v3M89.5 250v3M89.5 264v43M89.5 311v6M90.5 245v54M90.5 318v3M91.5 245v3M91.5 250v3M91.5 259v76M91.5 336v3M92.5 266v3M92.5 270v3M92.5 287v5M92.5 296v3M92.5 309v30M93.5 270v42M93.5 323v3M93.5 328v3M93.5 336v3M94.5 270v34M94.5 308v3M95.5 265v3M95.5 272v41M96.5 265v48M97.5 265v3M97.5 269v35M97.5 310v4M98.5 264v3M98.5 269v45M99.5 264v50M99.5 315v3M100.5 264v3M100.5 277v41M101.5 262v3M101.5 277v3M101.5 282v16M101.5 303v3M101.5 308v3M101.5 315v3M102.5 262v49M103.5 262v3M103.5 269v29M103.5 305v6M104.5 268v40M105.5 267v36M105.5 305v3M106.5 267v23M106.5 294v3M106.5 302v3M107.5 267v3M107.5 273v32M108.5 254v3M108.5 259v38M108.5 302v3M109.5 254v33M109.5 292v4M109.5 298v3M110.5 254v3M110.5 264v3M110.5 273v31M110.5 311v3M111.5 273v3M111.5 281v33M111.5 319v3M112.5 257v3M112.5 285v37M113.5 257v60M113.5 319v3M114.5 257v3M114.5 266v35M114.5 304v3M114.5 309v3M114.5 314v3M114.5 319v3M115.5 266v56M116.5 263v6M116.5 283v4M116.5 288v34M117.5 256v3M117.5 263v36M117.5 304v5M117.5 311v3M118.5 256v53M119.5 256v3M119.5 260v41M119.5 306v4M120.5 260v50M121.5 260v37M121.5 298v6M121.5 307v3M122.5 261v43M122.5 312v3M123.5 261v6M123.5 273v42M124.5 274v30M124.5 312v3M124.5 335v3M125.5 271v67M126.5 260v6M126.5 271v55M126.5 335v3M127.5 260v24M127.5 302v3M127.5 317v3M127.5 323v3M128.5 260v20M128.5 281v4M128.5 293v3M129.5 264v6M129.5 276v20M129.5 300v3M130.5 267v38M131.5 267v38M132.5 267v3M132.5 280v18M132.5 301v7M132.5 312v3M133.5 280v3M133.5 284v3M133.5 293v22M134.5 275v3M134.5 293v22M135.5 256v5M135.5 272v33M135.5 312v3M136.5 256v49M136.5 308v3M137.5 246v3M137.5 256v55M138.5 246v65M139.5 246v3M139.5 252v41M139.5 297v3M139.5 302v3M139.5 307v3M140.5 258v3M140.5 271v32M141.5 254v3M141.5 269v34M141.5 306v3M142.5 254v55M143.5 254v3M143.5 267v34M143.5 306v5M143.5 347v3M143.5 351v3M144.5 267v3M144.5 272v3M144.5 280v74M145.5 272v82M146.5 272v3M146.5 280v30M146.5 318v3M146.5 346v3M146.5 350v3M147.5 277v6M147.5 289v32M148.5 275v39M148.5 318v3M148.5 324v3M149.5 275v52M150.5 275v3M150.5 279v3M150.5 283v40M150.5 324v3M151.5 276v3M151.5 288v3M151.5 301v22M152.5 276v43M152.5 331v3M153.5 261v3M153.5 276v3M153.5 287v4M153.5 293v41M154.5 253v57M154.5 323v3M154.5 331v3M155.5 253v73M156.5 253v3M156.5 273v3M156.5 283v43M157.5 273v47M158.5 273v3M158.5 278v19M158.5 299v3M158.5 303v3M158.5 317v3M159.5 272v3M159.5 278v42M160.5 272v48M161.5 272v3M161.5 280v28M161.5 315v3M162.5 280v28M162.5 317v3M163.5 260v3M163.5 282v3M163.5 286v34M164.5 260v45M164.5 308v3M164.5 317v3M165.5 260v3M165.5 278v47M165.5 330v3M166.5 283v5M166.5 290v3M166.5 303v30M167.5 284v41M167.5 330v3M168.5 284v33M168.5 319v3M169.5 284v3M169.5 293v14M169.5 308v3M170.5 292v19M171.5 279v3M171.5 285v3M171.5 292v24M172.5 279v37M172.5 322v3M173.5 279v3M173.5 284v41M173.5 331v3M173.5 343v3M174.5 284v3M174.5 294v52M175.5 270v3M175.5 282v46M175.5 331v3M175.5 338v3M175.5 343v3M176.5 270v71M177.5 270v3M177.5 278v49M177.5 337v4M177.5 342v3M177.5 366v3M178.5 278v3M178.5 316v6M178.5 323v46M179.5 283v3M179.5 310v3M179.5 316v45M179.5 366v3M180.5 283v60M181.5 283v3M181.5 290v31M181.5 340v4M182.5 268v3M182.5 274v3M182.5 282v62M183.5 268v59M183.5 341v4M184.5 268v3M184.5 274v3M184.5 295v51M184.5 367v3M185.5 300v3M185.5 304v3M185.5 311v3M185.5 318v3M185.5 323v47M186.5 282v3M186.5 300v32M186.5 343v3M186.5 367v3M187.5 282v44M187.5 329v4M187.5 335v3M188.5 261v3M188.5 274v3M188.5 282v3M188.5 288v3M188.5 300v38M189.5 261v44M189.5 313v3M189.5 317v6M189.5 330v3M189.5 335v3M190.5 256v3M190.5 261v59M191.5 256v48M191.5 311v5M191.5 317v3M192.5 256v3M192.5 269v46M193.5 269v3M193.5 289v18M193.5 311v4M193.5 318v3M193.5 325v3M194.5 289v39M195.5 260v3M195.5 290v23M195.5 318v3M195.5 325v3M196.5 260v45M196.5 308v5M197.5 260v3M197.5 278v34M197.5 325v3M197.5 352v4M198.5 270v3M198.5 278v3M198.5 284v3M198.5 308v48M199.5 254v3M199.5 270v77M199.5 352v4M200.5 254v62M200.5 338v3M200.5 342v3M201.5 254v3M201.5 275v20M201.5 306v3M201.5 313v3M202.5 275v26M202.5 305v3M202.5 329v3M203.5 275v3M203.5 286v3M203.5 290v3M203.5 297v35M203.5 348v3M204.5 272v3M204.5 283v68M205.5 243v66M205.5 315v3M205.5 348v3M206.5 243v66M207.5 243v3M207.5 265v3M207.5 271v36M208.5 257v5M208.5 276v23M208.5 302v3M209.5 257v32M209.5 291v3M209.5 296v3M209.5 316v3M210.5 257v5M210.5 277v3M210.5 282v39M211.5 263v3M211.5 283v38M212.5 263v53M212.5 318v3M213.5 263v3M213.5 273v39M213.5 348v3M214.5 276v75M215.5 276v3M215.5 280v24M215.5 313v3M215.5 325v3M215.5 348v3M216.5 262v3M216.5 280v3M216.5 284v44M216.5 330v3M217.5 262v71M218.5 262v3M218.5 284v50M219.5 284v3M219.5 297v37M220.5 268v3M220.5 282v40M220.5 325v3M220.5 329v5M221.5 268v64M222.5 268v3M222.5 293v27M222.5 329v5M222.5 336v3M223.5 293v3M223.5 298v41M224.5 280v3M224.5 298v3M224.5 310v3M224.5 317v3M224.5 323v11M224.5 336v5M225.5 278v63M226.5 278v59M226.5 338v3M226.5 362v3M227.5 277v4M227.5 311v55M228.5 277v89M229.5 277v54M229.5 332v3M229.5 363v3M230.5 295v3M230.5 310v3M230.5 319v16M231.5 279v3M231.5 289v3M231.5 295v40M232.5 279v58M233.5 279v3M233.5 289v3M233.5 299v38M234.5 288v6M234.5 299v32M234.5 334v3M235.5 288v36M235.5 328v3M235.5 333v3M236.5 259v3M236.5 265v3M236.5 288v48M237.5 258v53M237.5 315v3M237.5 333v3M238.5 258v60M239.5 258v3M239.5 280v3M239.5 284v53M240.5 275v3M240.5 284v53M241.5 273v39M241.5 334v3M242.5 273v39M242.5 324v3M243.5 265v3M243.5 273v3M243.5 292v3M243.5 302v25M244.5 265v50M244.5 324v3M244.5 357v3M245.5 265v3M245.5 295v65M246.5 282v3M246.5 298v62M247.5 282v68M247.5 356v3M247.5 373v3M247.5 389v3M248.5 282v3M248.5 326v3M248.5 343v3M248.5 349v45M249.5 335v3M249.5 356v3M249.5 362v3M249.5 366v28M250.5 292v3M250.5 335v45M250.5 391v3M251.5 292v69M251.5 362v3M251.5 377v3M251.5 406v3M252.5 292v3M252.5 324v3M252.5 335v74M253.5 282v3M253.5 297v3M253.5 324v36M253.5 406v3M254.5 282v71M254.5 357v3M255.5 282v3M255.5 297v3M255.5 312v41M256.5 310v30M256.5 343v3M256.5 349v3M256.5 371v3M257.5 310v64M258.5 310v3M258.5 318v28M258.5 351v3M258.5 371v3M259.5 285v3M259.5 309v3M259.5 318v3M259.5 327v27M260.5 285v43M260.5 329v3M260.5 343v3M260.5 351v3M260.5 371v3M261.5 285v3M261.5 300v74M262.5 302v6M262.5 311v3M262.5 315v11M262.5 342v3M262.5 356v3M262.5 371v3M263.5 298v3M263.5 311v48M264.5 298v52M264.5 356v3M264.5 362v3M264.5 367v3M265.5 298v3M265.5 315v5M265.5 324v46M266.5 295v3M266.5 304v3M266.5 308v39M266.5 362v3M266.5 367v3M267.5 271v56M267.5 334v3M267.5 344v3M267.5 359v3M268.5 271v91M268.5 383v3M269.5 265v3M269.5 271v3M269.5 287v3M269.5 302v84M270.5 265v92M270.5 367v3M270.5 383v3M271.5 265v3M271.5 270v100M272.5 270v3M272.5 286v3M272.5 292v3M272.5 303v77M272.5 387v3M273.5 286v105M274.5 263v3M274.5 286v3M274.5 323v3M274.5 335v3M274.5 353v38M275.5 263v115M275.5 380v3M275.5 388v3M276.5 263v3M276.5 284v63M276.5 366v3M277.5 284v63M278.5 284v6M278.5 295v58M278.5 355v3M279.5 295v3M279.5 308v50M279.5 375v3M280.5 291v3M280.5 308v70M280.5 389v3M281.5 291v101M282.5 291v3M282.5 302v44M282.5 377v3M282.5 389v3M283.5 289v3M283.5 295v85M283.5 448v3M284.5 289v162M285.5 289v3M285.5 298v3M285.5 315v112M285.5 448v3M286.5 288v3M286.5 298v102M286.5 423v3M287.5 288v81M287.5 372v3M287.5 396v4M288.5 288v3M288.5 315v84M289.5 301v3M289.5 314v4M289.5 321v34M289.5 372v3M289.5 396v3M289.5 411v3M290.5 301v113M291.5 287v3M291.5 301v3M291.5 314v3M291.5 326v80M291.5 411v3M292.5 287v90M292.5 403v3M293.5 287v3M293.5 295v47M293.5 347v4M293.5 374v3M293.5 387v3M294.5 296v3M294.5 307v89M295.5 296v100M296.5 296v3M296.5 322v51M296.5 393v3M296.5 399v3M297.5 296v106M298.5 296v3M298.5 305v88M298.5 398v4M298.5 406v3M299.5 272v3M299.5 287v3M299.5 323v3M299.5 328v81M300.5 272v66M300.5 343v3M300.5 355v3M300.5 398v3M300.5 406v3M301.5 272v3M301.5 287v3M301.5 307v85M302.5 307v3M302.5 311v3M302.5 315v3M302.5 343v3M302.5 355v37M303.5 311v65M303.5 377v3M303.5 386v6M303.5 407v6M304.5 311v3M304.5 315v3M304.5 348v71M304.5 430v3M305.5 344v7M305.5 384v3M305.5 394v39M306.5 331v3M306.5 344v51M306.5 407v6M306.5 426v3M306.5 430v3M307.5 331v98M308.5 331v3M308.5 341v3M308.5 352v3M308.5 359v41M308.5 426v3M309.5 341v50M309.5 397v6M310.5 287v3M310.5 341v3M310.5 359v3M310.5 378v3M310.5 386v24M310.5 413v3M310.5 427v3M311.5 287v143M312.5 287v3M312.5 310v74M312.5 405v3M312.5 413v3M312.5 427v3M313.5 310v3M313.5 318v3M313.5 323v85M314.5 323v85M315.5 294v3M315.5 324v77M315.5 407v3M316.5 294v116M317.5 294v116M317.5 445v3M318.5 296v3M318.5 320v128M319.5 320v3M319.5 334v90M319.5 445v3M320.5 293v3M320.5 334v3M320.5 366v36M320.5 421v3M321.5 293v92M321.5 399v3M322.5 293v3M322.5 300v58M322.5 374v5M322.5 382v3M322.5 404v3M323.5 300v3M323.5 306v3M323.5 311v3M323.5 324v83M324.5 279v3M324.5 300v90M324.5 404v3M325.5 279v85M325.5 384v3M326.5 264v3M326.5 279v3M326.5 295v3M326.5 299v65M326.5 385v3M327.5 264v124M328.5 264v3M328.5 269v3M328.5 295v3M328.5 326v49M328.5 385v3M329.5 269v148M329.5 422v3M330.5 269v3M330.5 291v134M331.5 291v3M331.5 305v82M331.5 388v3M331.5 401v3M331.5 422v3M332.5 296v3M332.5 305v3M332.5 314v3M332.5 327v34M332.5 371v3M333.5 296v78M333.5 387v3M334.5 296v3M334.5 315v3M334.5 321v69M334.5 392v3M335.5 270v3M335.5 315v80M336.5 270v121M336.5 392v3M337.5 270v3M337.5 276v105M337.5 388v3M338.5 279v64M338.5 354v3M338.5 378v3M338.5 385v6M339.5 279v3M339.5 293v3M339.5 302v3M339.5 314v77M340.5 278v3M340.5 293v74M340.5 385v6M341.5 278v78M341.5 360v3M341.5 384v3M342.5 278v3M342.5 300v3M342.5 330v57M343.5 300v87M344.5 288v3M344.5 300v3M344.5 325v37M344.5 384v3M345.5 288v64M345.5 359v3M345.5 383v3M345.5 405v3M346.5 288v3M346.5 334v3M346.5 340v68M347.5 334v25M347.5 375v6M347.5 383v3M347.5 405v3M348.5 334v47M348.5 395v3M349.5 338v3M349.5 349v49M350.5 349v18M350.5 369v7M350.5 380v3M350.5 395v3M351.5 333v3M351.5 346v37M352.5 333v88M352.5 424v3M352.5 430v3M353.5 328v3M353.5 333v3M353.5 350v6M353.5 383v50M354.5 294v3M354.5 328v56M354.5 385v3M354.5 401v3M354.5 420v3M354.5 424v3M354.5 430v6M355.5 294v142M356.5 294v3M356.5 321v80M356.5 410v3M356.5 415v3M356.5 420v3M356.5 433v3M357.5 284v3M357.5 305v3M357.5 310v108M358.5 284v111M358.5 403v3M358.5 410v3M358.5 415v3M359.5 284v3M359.5 291v115M360.5 291v3M360.5 305v95M360.5 403v3M361.5 290v3M361.5 305v63M361.5 370v3M361.5 384v3M362.5 290v63M362.5 361v3M362.5 365v4M363.5 290v3M363.5 308v61M363.5 392v3M364.5 308v3M364.5 317v3M364.5 326v69M364.5 417v3M364.5 425v3M365.5 317v111M366.5 317v3M366.5 352v57M366.5 412v8M366.5 425v3M367.5 286v3M367.5 352v3M367.5 356v3M367.5 370v47M367.5 421v3M368.5 286v138M369.5 286v3M369.5 327v3M369.5 331v70M369.5 421v3M370.5 327v57M370.5 397v5M371.5 280v3M371.5 327v3M371.5 335v3M371.5 348v54M371.5 406v3M372.5 280v129M373.5 280v3M373.5 299v60M373.5 362v3M373.5 369v3M373.5 406v3M374.5 292v3M374.5 297v69M375.5 274v3M375.5 292v74M376.5 274v82M376.5 363v3M377.5 274v69M377.5 345v3M377.5 353v3M378.5 283v69M379.5 284v68M380.5 287v3M380.5 305v69M380.5 378v3M381.5 279v3M381.5 305v3M381.5 309v3M381.5 323v3M381.5 327v54M382.5 279v93M382.5 378v3M382.5 383v3M383.5 279v3M383.5 312v3M383.5 323v63M384.5 308v3M384.5 312v74M384.5 387v3M385.5 308v82M386.5 303v34M386.5 350v3M386.5 354v3M386.5 387v3M387.5 303v50M387.5 355v3M388.5 303v3M388.5 319v41M388.5 367v5M389.5 304v3M389.5 319v3M389.5 327v3M389.5 340v32M389.5 383v3M390.5 304v82M391.5 304v3M391.5 315v60M391.5 383v3M392.5 313v53M392.5 367v3M392.5 381v3M393.5 313v71M394.5 313v3M394.5 331v45M394.5 381v3M395.5 326v3M395.5 331v3M395.5 346v20M395.5 372v6M396.5 326v52M397.5 283v3M397.5 326v43M397.5 372v6M398.5 283v92M399.5 274v3M399.5 283v3M399.5 287v65M399.5 353v3M399.5 357v3M399.5 372v3M400.5 274v42M400.5 331v3M401.5 274v64M401.5 340v3M402.5 257v5M402.5 279v3M402.5 286v3M402.5 305v38M403.5 257v63M403.5 323v3M403.5 340v3M403.5 348v3M404.5 257v5M404.5 283v3M404.5 291v60M405.5 279v3M405.5 283v62M405.5 348v3M406.5 279v30M406.5 318v3M406.5 332v3M406.5 345v3M407.5 252v3M407.5 277v71M408.5 252v50M408.5 305v3M408.5 318v3M408.5 327v3M408.5 332v3M408.5 345v3M409.5 252v78M410.5 253v50M410.5 305v3M410.5 326v4M410.5 354v3M411.5 253v104M412.5 254v54M412.5 326v3M412.5 341v3M412.5 354v3M413.5 255v3M413.5 280v3M413.5 287v57M414.5 270v3M414.5 280v44M414.5 328v3M414.5 341v3M415.5 244v3M415.5 270v61M416.5 244v64M416.5 324v3M416.5 328v5M417.5 244v3M417.5 254v3M417.5 273v60M417.5 336v3M418.5 254v85M419.5 254v3M419.5 283v39M419.5 332v3M419.5 336v3M420.5 235v3M420.5 240v95M421.5 235v82M421.5 318v3M421.5 332v3M422.5 235v3M422.5 242v3M422.5 252v3M422.5 272v49M423.5 252v46M423.5 302v6M423.5 309v3M423.5 318v3M424.5 252v3M424.5 270v38M425.5 265v3M425.5 270v28M425.5 302v6M425.5 311v3M426.5 244v3M426.5 265v49M427.5 244v66M427.5 311v3M427.5 320v3M428.5 243v4M428.5 248v3M428.5 263v60M429.5 243v40M429.5 319v4M430.5 243v3M430.5 248v3M430.5 255v67M431.5 252v6M431.5 267v43M431.5 319v4M432.5 252v72M433.5 252v72M434.5 284v34M434.5 321v3M435.5 237v3M435.5 255v3M435.5 266v58M436.5 237v61M436.5 306v3M436.5 321v3M437.5 237v3M437.5 255v3M437.5 263v3M437.5 267v33M438.5 246v3M438.5 254v46M439.5 233v3M439.5 243v52M439.5 297v3M440.5 233v32M440.5 289v3M441.5 233v3M441.5 237v37M441.5 279v6M442.5 237v57M442.5 304v3M443.5 237v3M443.5 251v3M443.5 261v46M444.5 240v3M444.5 245v3M444.5 251v56M445.5 240v43M445.5 303v3M446.5 229v3M446.5 240v43M447.5 229v40M447.5 276v3M447.5 280v3M448.5 229v3M448.5 235v3M448.5 242v4M448.5 253v26M449.5 235v39M449.5 276v3M450.5 235v39M451.5 243v31M451.5 277v3M451.5 288v3M452.5 227v3M452.5 243v48M453.5 227v53M453.5 288v3M454.5 227v3M454.5 238v27M454.5 277v3M455.5 238v3M455.5 245v35M456.5 245v31M456.5 277v3M457.5 246v30M458.5 239v3M458.5 246v20M458.5 272v3M459.5 239v27M460.5 239v23M460.5 272v3M461.5 232v3M461.5 240v35M462.5 222v3M462.5 232v37M462.5 272v3M463.5 222v47M464.5 222v3M464.5 239v33M465.5 233v3M465.5 237v35M466.5 230v18M466.5 254v3M466.5 265v3M466.5 269v3M467.5 230v21M468.5 211v3M468.5 219v3M468.5 223v3M468.5 230v21M469.5 211v27M469.5 240v3M469.5 247v4M470.5 211v3M470.5 219v3M470.5 223v4M470.5 230v20M470.5 265v3M471.5 224v44M472.5 222v5M472.5 231v24M472.5 265v3M473.5 222v33M473.5 260v3M474.5 218v3M474.5 222v5M474.5 228v35M475.5 218v21M475.5 247v3M475.5 252v3M475.5 260v3M476.5 218v5M476.5 224v26M477.5 220v23M477.5 247v6M478.5 220v33M479.5 225v17M479.5 249v4M480.5 218v3M480.5 225v27M481.5 218v30M481.5 249v3M481.5 256v3M482.5 218v3M482.5 229v30M483.5 229v20M483.5 256v3M484.5 226v3M484.5 232v17M485.5 198v3M485.5 216v3M485.5 222v3M485.5 226v20M486.5 198v32M486.5 235v3M486.5 242v3M486.5 250v3M487.5 198v3M487.5 216v3M487.5 222v34M488.5 222v3M488.5 226v30M489.5 213v3M489.5 227v16M489.5 244v5M489.5 253v3M490.5 213v34M491.5 208v3M491.5 213v3M491.5 224v23M492.5 208v25M492.5 240v3M493.5 205v31M494.5 205v31M495.5 200v3M495.5 205v4M495.5 220v12M495.5 233v3M496.5 200v31M497.5 200v30M497.5 233v6M498.5 201v3M498.5 219v20M498.5 241v3M499.5 214v30M500.5 209v3M500.5 213v17M500.5 234v3M500.5 241v3M501.5 209v28M502.5 209v21M502.5 234v3M503.5 211v22M504.5 202v3M504.5 211v22M505.5 202v22M505.5 230v3M505.5 239v3M506.5 202v3M506.5 210v32M507.5 210v3M507.5 214v3M507.5 218v24M507.5 247v3M508.5 200v3M508.5 212v3M508.5 222v28M509.5 200v28M509.5 230v3M509.5 247v3M510.5 200v3M510.5 206v15M510.5 222v3M511.5 206v15M511.5 224v6M512.5 206v3M512.5 212v18M513.5 203v3M513.5 212v18M514.5 203v23M515.5 203v3M515.5 209v21M515.5 234v3M516.5 201v36M517.5 201v19M517.5 225v3M517.5 234v3M518.5 201v3M518.5 205v3M518.5 210v19M519.5 209v20M520.5 206v11M520.5 226v3M521.5 206v19M521.5 226v3M522.5 196v5M522.5 206v23M523.5 196v29M523.5 226v3M524.5 196v15M524.5 213v5M524.5 220v3M525.5 200v16M526.5 200v18M527.5 200v25M528.5 202v23M529.5 197v17M529.5 216v9M530.5 197v24M531.5 197v24M532.5 197v18M533.5 197v3M533.5 201v13M534.5 198v17M535.5 192v3M535.5 197v18M536.5 192v17M536.5 212v3M537.5 192v3M537.5 196v13M538.5 196v13M539.5 196v21M540.5 198v19M541.5 198v15M541.5 214v3M542.5 199v16M543.5 196v19M544.5 196v10M544.5 209v6M545.5 195v11M545.5 210v3M546.5 195v20M547.5 195v20M548.5 197v13M548.5 211v4M549.5 197v3M549.5 201v14M550.5 203v12M551.5 197v3M551.5 203v11M552.5 196v15M553.5 192v3M553.5 196v15M554.5 192v18M555.5 192v15M556.5 193v13M557.5 193v17M558.5 193v4M558.5 198v12M559.5 194v17M560.5 194v17M561.5 196v16M562.5 196v16M563.5 198v10M563.5 209v3M564.5 190v5M564.5 198v8M565.5 190v15M566.5 190v16M567.5 190v17M568.5 187v3M568.5 192v15M569.5 187v20M570.5 187v3M570.5 191v14M571.5 194v9M572.5 189v3M572.5 193v10M573.5 189v19M573.5 209v3M574.5 189v3M574.5 193v19M575.5 193v15M575.5 209v3M576.5 191v17M577.5 191v15M578.5 191v15M579.5 191v11M579.5 203v3M580.5 191v13M581.5 191v16M582.5 191v16M583.5 191v16M583.5 209v3M584.5 190v22M585.5 188v19M585.5 209v3M586.5 188v11M586.5 204v3M587.5 188v11M588.5 188v11M589.5 188v14M590.5 188v14M591.5 188v3M591.5 192v6M591.5 199v3M592.5 188v11M593.5 188v12M594.5 190v13M595.5 190v13M596.5 188v15M597.5 188v12M598.5 188v14M599.5 188v14M600.5 188v14M601.5 188v3M601.5 193v9M602.5 189v13M603.5 189v11M604.5 189v13M605.5 189v13M606.5 187v15M607.5 187v15M607.5 203v3M608.5 187v21M609.5 192v16M610.5 192v7M610.5 202v6M611.5 192v9M612.5 189v15M613.5 189v15M614.5 189v3M614.5 193v11M615.5 189v14M616.5 188v10M617.5 188v10M618.5 188v12M619.5 189v11M620.5 187v3M620.5 191v10M621.5 187v14M622.5 187v3M622.5 191v10M623.5 191v10M624.5 191v10M624.5 203v3M625.5 189v17M626.5 189v12M626.5 203v3M627.5 189v11M628.5 188v12M629.5 188v18M629.5 207v3M630.5 188v3M630.5 192v18M631.5 189v4M631.5 196v6M631.5 203v7M632.5 184v3M632.5 188v21M633.5 184v11M633.5 199v3M634.5 184v13M635.5 184v3M635.5 188v9M636.5 188v11M637.5 188v11M638.5 185v3M638.5 190v9M639.5 185v13M640.5 185v13M641.5 186v10M642.5 185v14M643.5 185v14M644.5 184v6M644.5 191v8M645.5 184v15M646.5 184v15M647.5 185v12M648.5 185v12M649.5 185v3M649.5 189v8M650.5 185v11M650.5 197v3M651.5 185v3M651.5 191v9M652.5 186v14M653.5 186v14M654.5 186v15M655.5 186v15M656.5 186v9M656.5 198v3M657.5 186v10M658.5 188v8M659.5 187v9M660.5 187v9M661.5 185v11M662.5 185v9M663.5 184v10M664.5 184v14M665.5 184v14M666.5 186v12M667.5 186v8M668.5 188v9M669.5 186v11M670.5 186v11M671.5 186v10M672.5 188v8M673.5 186v8M674.5 186v8M675.5 185v9M676.5 185v13M677.5 185v13M678.5 186v12M679.5 185v8M680.5 183v10M681.5 183v10M682.5 183v10M682.5 195v3M683.5 187v11M684.5 183v15M685.5 183v10M685.5 194v3M686.5 183v11M687.5 183v11M688.5 183v11M689.5 186v7M690.5 183v9M691.5 183v9M692.5 183v7M693.5 183v7M694.5 183v7M695.5 183v7M696.5 183v7M697.5 183v6M698.5 183v7M699.5 183v10M700.5 184v12M701.5 185v11M702.5 184v12M703.5 184v6M703.5 191v3M704.5 184v8M705.5 185v7M706.5 184v8M707.5 182v9M708.5 182v9M709.5 182v13M710.5 182v13M711.5 184v11M712.5 183v8M713.5 183v7M714.5 183v9M715.5 182v10M716.5 182v10M717.5 182v10M718.5 184v8M719.5 184v8M720.5 182v10M721.5 182v9M722.5 182v8M723.5 182v8M724.5 182v10M725.5 183v9M726.5 183v9M727.5 182v8M728.5 182v8M729.5 182v10M730.5 183v9M731.5 183v9M732.5 183v12M733.5 185v10M734.5 183v8M734.5 192v3M735.5 182v9M736.5 182v8M737.5 182v8M738.5 184v9M739.5 184v9M740.5 184v9M741.5 184v7M742.5 182v9M743.5 182v8M744.5 182v7M745.5 182v10M746.5 183v9M747.5 182v10M748.5 182v8M749.5 182v10M750.5 183v9M751.5 184v9M752.5 182v11M753.5 182v11M754.5 181v9M755.5 181v7M756.5 181v6M757.5 181v6M758.5 181v7M759.5 181v9M760.5 182v8M761.5 181v9M762.5 181v7M763.5 181v11M764.5 181v13M765.5 181v13M766.5 181v13M767.5 181v7M767.5 189v3M768.5 181v11M769.5 182v10M770.5 182v9M771.5 182v9M772.5 183v7M773.5 183v7M774.5 183v7M775.5 183v8M776.5 181v10M777.5 181v11M778.5 181v12M779.5 183v10M780.5 184v9M781.5 181v11M782.5 181v12M783.5 181v12M784.5 182v11M785.5 182v9M786.5 181v8M787.5 181v8M788.5 181v7M788.5 190v3M788.5 194v3M789.5 182v15M790.5 182v15M791.5 182v12M792.5 182v9M793.5 182v9M794.5 181v10M795.5 181v8M796.5 181v9M796.5 191v3M797.5 184v10M798.5 182v3M798.5 186v8M799.5 182v14M800.5 182v3M800.5 186v10M801.5 181v15M802.5 181v10M803.5 181v10M803.5 195v3M804.5 184v14M805.5 185v13M806.5 182v14M807.5 182v7M807.5 192v3M808.5 181v8M809.5 181v8M810.5 181v9M811.5 182v8M812.5 181v9M813.5 181v10M814.5 181v10M815.5 182v9M816.5 181v10M817.5 181v10M818.5 181v10M819.5 181v9M820.5 183v7M821.5 180v10M822.5 180v9M823.5 180v9M824.5 181v8M825.5 181v8M826.5 181v7M827.5 180v7M828.5 180v10M829.5 180v10M830.5 181v9M831.5 181v9M832.5 181v8M833.5 183v6M834.5 181v8M835.5 181v7M836.5 180v7M837.5 180v7M838.5 180v10M839.5 180v10M840.5 180v10M841.5 180v9M842.5 180v10M843.5 180v10M844.5 182v8M845.5 180v8M846.5 180v8M847.5 180v9M848.5 181v8M849.5 181v8M850.5 181v8M851.5 181v8M851.5 190v3M852.5 181v12M853.5 181v12M854.5 181v11M855.5 181v3M855.5 185v12M856.5 183v14M857.5 183v14M858.5 182v10M858.5 193v3M859.5 179v13M860.5 179v10"/>
<path id="episode-q0" stroke="#edb120" d="M67.5 173v3M68.5 173v3M69.5 173v3M70.5 173v3M71.5 173v3M72.5 173v3M73.5 173v3M74.5 173v4M75.5 173v4M76.5 173v5M77.5 173v6M78.5 174v5M79.5 174v7M80.5 175v6M81.5 175v6M82.5 175v9M83.5 176v8M84.5 176v8M85.5 176v8M86.5 176v10M87.5 176v10M88.5 177v9M89.5 175v11M90.5 175v11M91.5 175v12M92.5 175v12M93.5 175v12M94.5 176v11M95.5 175v13M96.5 175v13M97.5 175v13M98.5 175v13M99.5 175v15M100.5 175v15M101.5 175v15M102.5 175v12M103.5 175v14M104.5 175v14M105.5 175v14M106.5 175v14M107.5 175v13M108.5 175v14M109.5 175v14M110.5 175v14M111.5 177v12M112.5 177v12M113.5 177v12M114.5 177v15M115.5 177v15M116.5 176v12M116.5 189v3M117.5 176v14M118.5 176v14M119.5 175v15M120.5 175v14M120.5 190v3M121.5 175v18M122.5 178v15M123.5 175v12M124.5 175v12M125.5 175v16M126.5 175v16M127.5 175v19M128.5 175v19M129.5 176v18M130.5 176v15M130.5 193v3M131.5 176v20M132.5 176v12M132.5 193v3M133.5 176v12M134.5 177v14M135.5 177v14M136.5 178v9M136.5 188v4M137.5 176v16M138.5 176v16M139.5 176v16M140.5 178v14M141.5 177v15M142.5 177v14M143.5 176v15M144.5 176v15M145.5 176v15M146.5 176v15M147.5 176v5M147.5 182v10M148.5 176v16M149.5 176v16M150.5 175v18M151.5 175v18M152.5 175v18M153.5 177v14M154.5 176v13M155.5 173v18M156.5 173v18M157.5 173v4M157.5 178v13M158.5 174v17M159.5 174v16M160.5 175v13M161.5 175v15M162.5 173v17M163.5 173v13M163.5 187v4M164.5 173v18M165.5 174v17M166.5 174v16M167.5 177v13M168.5 174v16M169.5 173v17M170.5 173v13M170.5 187v3M171.5 173v13M171.5 187v3M172.5 174v16M172.5 197v3M173.5 174v26M174.5 174v15M174.5 197v3M175.5 174v14M176.5 174v15M177.5 173v16M178.5 173v16M179.5 173v16M180.5 174v15M181.5 173v16M182.5 173v16M183.5 172v17M184.5 172v17M185.5 172v12M185.5 185v4M186.5 174v16M187.5 174v16M188.5 174v16M189.5 176v13M190.5 171v3M190.5 175v14M191.5 171v18M192.5 171v14M192.5 186v3M193.5 174v16M194.5 172v18M195.5 172v18M196.5 172v17M197.5 173v16M198.5 174v14M199.5 173v14M200.5 171v17M201.5 171v17M202.5 171v17M203.5 171v3M203.5 176v11M204.5 171v17M205.5 171v17M206.5 173v15M207.5 171v17M208.5 171v17M209.5 171v16M210.5 170v4M210.5 175v14M211.5 170v19M212.5 170v19M213.5 170v17M214.5 170v18M215.5 170v18M216.5 170v11M216.5 182v7M217.5 171v18M218.5 170v5M218.5 180v9M219.5 170v19M219.5 191v3M220.5 170v24M221.5 169v19M221.5 191v3M222.5 169v13M222.5 183v8M223.5 169v22M224.5 169v18M224.5 188v3M225.5 169v13M225.5 184v3M226.5 169v13M226.5 183v3M227.5 169v4M227.5 175v14M228.5 169v20M229.5 169v20M230.5 169v20M231.5 170v19M232.5 170v16M233.5 169v17M234.5 169v19M235.5 169v19M235.5 189v3M236.5 171v6M236.5 182v10M237.5 171v21M238.5 171v19M238.5 198v3M239.5 170v3M239.5 175v26M240.5 170v20M240.5 198v3M241.5 170v18M242.5 172v16M243.5 172v14M244.5 171v4M244.5 178v8M245.5 168v18M246.5 168v20M247.5 168v4M247.5 173v15M248.5 171v17M249.5 171v20M250.5 171v3M250.5 176v15M250.5 193v3M251.5 168v3M251.5 175v21M252.5 168v15M252.5 185v5M252.5 193v3M253.5 168v3M253.5 172v18M254.5 168v18M254.5 187v3M255.5 168v3M255.5 173v13M256.5 168v22M256.5 193v3M257.5 168v28M258.5 168v11M258.5 181v3M258.5 186v4M258.5 193v3M259.5 168v21M260.5 168v13M260.5 182v3M260.5 186v3M261.5 168v17M262.5 168v17M263.5 168v8M263.5 179v5M264.5 168v16M264.5 194v3M265.5 167v30M266.5 167v16M266.5 194v3M267.5 167v16M267.5 187v3M268.5 169v21M269.5 166v17M269.5 187v3M270.5 166v21M271.5 166v3M271.5 170v3M271.5 175v12M272.5 170v17M272.5 190v3M273.5 166v7M273.5 174v19M274.5 166v21M274.5 190v3M275.5 166v20M276.5 166v20M277.5 166v19M278.5 167v18M279.5 166v9M279.5 177v3M279.5 192v3M280.5 166v29M281.5 166v3M281.5 170v3M281.5 174v24M282.5 168v30M283.5 165v19M283.5 185v3M283.5 195v3M284.5 165v17M285.5 165v17M286.5 165v17M287.5 166v15M288.5 165v16M289.5 165v16M290.5 165v16M291.5 164v17M291.5 185v3M292.5 164v24M293.5 164v20M293.5 185v3M294.5 167v3M294.5 171v13M295.5 166v13M295.5 181v3M296.5 164v15M297.5 164v15M298.5 164v16M299.5 164v16M299.5 183v3M300.5 165v21M301.5 165v15M301.5 183v4M302.5 164v23M303.5 164v23M304.5 164v3M304.5 168v15M305.5 168v10M305.5 179v4M306.5 166v5M306.5 172v10M307.5 163v22M308.5 163v22M309.5 163v22M310.5 164v16M311.5 164v17M311.5 185v3M311.5 189v3M312.5 164v28M313.5 164v15M313.5 185v3M313.5 189v3M314.5 164v15M315.5 167v12M315.5 190v3M316.5 164v29M317.5 164v18M317.5 190v3M318.5 164v18M319.5 164v13M319.5 178v4M320.5 163v14M321.5 163v14M322.5 162v15M323.5 162v15M324.5 162v16M324.5 182v3M325.5 164v21M326.5 163v15M326.5 182v3M327.5 163v11M327.5 175v3M328.5 163v15M329.5 165v4M329.5 170v9M330.5 166v16M331.5 162v3M331.5 166v16M332.5 162v14M332.5 179v3M332.5 191v3M333.5 162v32M334.5 163v18M334.5 191v3M335.5 163v20M336.5 163v20M337.5 163v15M337.5 180v3M338.5 162v16M339.5 162v16M340.5 161v13M340.5 175v3M341.5 161v14M342.5 161v17M343.5 162v16M344.5 162v16M345.5 162v13M346.5 161v14M346.5 179v3M347.5 161v21M348.5 161v21M349.5 164v10M349.5 175v7M350.5 162v20M351.5 162v20M352.5 160v14M352.5 177v3M353.5 160v14M354.5 160v14M355.5 161v13M356.5 161v13M357.5 161v14M358.5 161v14M358.5 177v3M359.5 161v19M360.5 160v13M360.5 177v3M361.5 160v13M362.5 160v13M363.5 161v12M364.5 161v12M365.5 160v13M366.5 160v12M367.5 160v12M368.5 161v11M369.5 161v9M370.5 160v10M371.5 160v11M372.5 160v12M373.5 160v12M374.5 159v13M374.5 173v3M375.5 159v17M376.5 159v13M376.5 173v3M377.5 160v12M378.5 160v14M379.5 159v15M380.5 159v25M380.5 185v3M381.5 159v29M382.5 159v17M382.5 185v3M383.5 162v14M384.5 159v17M385.5 159v15M386.5 159v15M387.5 159v15M388.5 159v15M389.5 159v14M390.5 159v14M391.5 159v14M392.5 158v11M393.5 158v12M394.5 158v15M395.5 158v15M396.5 158v15M397.5 158v15M398.5 158v12M398.5 177v3M399.5 158v22M400.5 158v17M400.5 177v3M401.5 158v4M401.5 163v12M402.5 159v16M403.5 159v16M404.5 159v11M404.5 172v3M405.5 159v11M406.5 159v11M406.5 171v5M407.5 159v17M408.5 160v16M409.5 160v10M409.5 171v3M410.5 160v10M411.5 161v9M412.5 161v9M413.5 159v10M414.5 159v12M414.5 173v3M415.5 159v17M416.5 160v16M417.5 161v10M418.5 161v10M419.5 162v9M420.5 160v11M421.5 160v11M422.5 160v11M422.5 186v3M423.5 160v29M424.5 160v21M424.5 186v3M425.5 160v10M425.5 172v3M426.5 160v12M426.5 177v3M427.5 160v20M428.5 161v11M428.5 177v3M429.5 160v12M430.5 160v11M431.5 160v11M432.5 161v10M433.5 161v11M434.5 161v13M435.5 161v13M436.5 161v13M437.5 162v11M437.5 181v3M438.5 161v23M439.5 161v12M439.5 181v3M440.5 161v12M441.5 161v13M442.5 161v15M443.5 162v14M443.5 181v3M444.5 162v22M445.5 162v18M445.5 181v3M446.5 162v14M447.5 162v14M448.5 162v14M449.5 162v12M450.5 162v12M451.5 162v13M452.5 163v12M453.5 163v12M454.5 163v12M454.5 180v3M455.5 163v20M456.5 162v3M456.5 166v18M457.5 162v22M458.5 162v13M458.5 178v6M459.5 162v19M460.5 165v9M460.5 178v3M460.5 192v3M461.5 164v31M462.5 163v13M462.5 192v3M463.5 163v14M464.5 163v14M465.5 164v13M465.5 181v3M466.5 165v19M467.5 165v12M467.5 181v3M468.5 165v12M469.5 165v12M469.5 193v3M470.5 165v31M471.5 165v10M471.5 177v3M471.5 193v3M472.5 165v15M473.5 166v14M474.5 165v14M475.5 165v12M475.5 179v3M476.5 164v18M477.5 164v14M477.5 179v3M478.5 164v20M479.5 164v20M480.5 167v6M480.5 175v9M481.5 167v11M481.5 192v3M482.5 167v28M483.5 165v20M483.5 192v3M484.5 165v13M484.5 182v3M485.5 165v10M485.5 177v3M486.5 164v16M487.5 164v16M488.5 164v17M489.5 164v17M490.5 164v17M491.5 164v15M492.5 164v15M493.5 165v14M494.5 165v14M494.5 184v3M495.5 166v21M496.5 165v22M497.5 165v13M498.5 165v17M498.5 185v3M499.5 165v23M500.5 168v6M500.5 176v4M500.5 185v3M500.5 194v3M501.5 168v29M502.5 166v14M502.5 194v3M503.5 166v14M504.5 166v20M504.5 187v3M505.5 165v25M506.5 165v15M506.5 187v3M507.5 165v16M508.5 166v15M509.5 166v15M510.5 166v15M511.5 166v15M512.5 166v15M513.5 166v15M514.5 166v15M515.5 166v15M516.5 166v15M516.5 182v3M517.5 166v19M518.5 168v17M519.5 168v13M519.5 185v3M520.5 169v19M521.5 168v13M521.5 185v3M522.5 168v13M523.5 167v14M524.5 167v14M525.5 167v14M526.5 167v16M527.5 167v16M528.5 167v16M529.5 167v15M530.5 169v13M531.5 170v11M531.5 188v3M532.5 169v22M533.5 169v13M533.5 188v3M534.5 167v15M535.5 167v15M536.5 167v15M537.5 167v15M538.5 167v15M539.5 168v9M539.5 178v3M539.5 195v3M540.5 168v30M541.5 170v16M541.5 195v3M542.5 167v19M543.5 167v19M544.5 167v3M544.5 172v19M545.5 167v3M545.5 172v19M546.5 167v14M546.5 188v3M547.5 167v4M547.5 172v19M548.5 168v14M548.5 188v3M549.5 168v14M549.5 193v3M550.5 168v28M551.5 168v15M551.5 193v3M552.5 168v15M553.5 168v15M554.5 168v15M555.5 168v3M555.5 172v10M555.5 186v3M556.5 168v21M557.5 168v9M557.5 178v3M557.5 185v4M557.5 193v3M558.5 168v28M559.5 169v19M559.5 193v3M560.5 169v19M561.5 168v12M561.5 185v3M562.5 168v15M563.5 168v17M564.5 171v14M565.5 171v14M565.5 189v3M566.5 171v21M567.5 170v14M567.5 189v3M568.5 169v15M569.5 169v15M569.5 197v3M570.5 168v32M571.5 168v16M571.5 197v3M572.5 168v18M573.5 169v20M574.5 169v20M575.5 171v11M575.5 186v3M576.5 170v15M577.5 170v15M577.5 189v3M578.5 170v22M579.5 170v14M579.5 189v3M579.5 201v3M580.5 169v35M581.5 169v20M581.5 201v3M582.5 169v20M583.5 169v18M584.5 169v18M584.5 191v3M585.5 170v26M586.5 170v26M586.5 198v3M587.5 170v31M588.5 170v16M588.5 198v3M589.5 173v13M590.5 173v13M591.5 169v3M591.5 174v11M591.5 197v3M592.5 169v31M593.5 169v3M593.5 174v22M593.5 197v3M594.5 171v18M595.5 169v18M596.5 169v19M597.5 169v19M598.5 172v18M599.5 171v19M600.5 171v19M600.5 194v3M601.5 171v3M601.5 175v22M602.5 171v12M602.5 194v3M603.5 171v14M604.5 171v14M605.5 173v12M605.5 186v4M606.5 173v20M607.5 169v24M608.5 169v18M608.5 189v4M609.5 169v3M609.5 173v19M609.5 193v6M610.5 173v26M611.5 174v3M611.5 178v14M611.5 193v6M612.5 170v3M612.5 174v18M613.5 170v22M614.5 170v21M615.5 170v16M616.5 170v16M616.5 197v3M617.5 170v30M618.5 170v17M618.5 197v3M619.5 173v15M620.5 173v15M621.5 173v11M621.5 185v3M621.5 193v3M622.5 171v25M623.5 171v17M623.5 193v3M624.5 171v10M624.5 183v5M624.5 202v3M625.5 171v34M626.5 170v16M626.5 202v3M627.5 170v15M627.5 189v3M628.5 170v22M629.5 172v20M630.5 170v5M630.5 177v12M631.5 170v14M631.5 185v3M631.5 203v3M632.5 170v36M633.5 170v26M633.5 203v3M634.5 170v19M635.5 171v18M636.5 171v17M637.5 171v20M638.5 172v19M639.5 172v19M640.5 172v17M641.5 170v18M642.5 170v18M643.5 170v13M643.5 184v3M644.5 170v13M644.5 184v3M645.5 170v17M646.5 174v13M646.5 198v3M647.5 173v28M648.5 171v17M648.5 198v3M649.5 171v17M649.5 199v3M650.5 171v31M651.5 171v16M651.5 199v3M652.5 171v16M653.5 171v17M653.5 196v3M654.5 171v28M655.5 171v12M655.5 185v4M655.5 196v3M656.5 172v17M657.5 175v14M658.5 171v16M659.5 171v10M659.5 183v3M660.5 171v11M661.5 171v18M661.5 194v3M662.5 171v26M663.5 171v16M663.5 194v3M664.5 171v13M664.5 189v3M665.5 171v21M666.5 171v21M667.5 172v18M668.5 172v14M668.5 187v3M669.5 172v14M669.5 191v3M670.5 172v22M671.5 172v22M672.5 173v18M673.5 173v15M674.5 172v11M674.5 185v3M675.5 172v14M676.5 171v15M677.5 171v15M677.5 203v3M678.5 171v3M678.5 175v31M679.5 172v22M679.5 203v3M680.5 172v15M680.5 191v3M681.5 172v15M681.5 193v4M682.5 172v25M683.5 175v9M683.5 193v4M684.5 175v10M685.5 175v10M686.5 173v15M686.5 190v3M687.5 173v20M688.5 172v21M689.5 172v17M689.5 190v3M690.5 172v16M691.5 173v15M692.5 174v14M692.5 189v3M693.5 174v18M694.5 171v21M695.5 171v19M696.5 171v19M697.5 172v18M698.5 172v16M699.5 172v16M700.5 172v16M701.5 172v16M702.5 171v13M702.5 185v3M703.5 171v15M704.5 171v16M705.5 172v15M706.5 172v16M707.5 172v16M708.5 172v16M709.5 172v16M710.5 173v15M711.5 173v17M712.5 172v6M712.5 180v12M713.5 172v20M714.5 172v20M715.5 172v17M716.5 172v15M717.5 174v11M718.5 174v15M719.5 173v16M720.5 173v11M720.5 185v4M720.5 193v3M721.5 173v23M722.5 173v3M722.5 180v12M722.5 193v3M723.5 173v19M724.5 173v14M724.5 189v3M725.5 174v16M726.5 176v14M727.5 172v14M727.5 187v3M728.5 172v16M729.5 172v16M730.5 174v8M730.5 185v3M731.5 172v10M731.5 185v3M732.5 172v16M733.5 172v16M734.5 173v13M735.5 173v14M736.5 173v14M737.5 173v14M738.5 172v15M739.5 172v15M740.5 172v3M740.5 176v16M740.5 195v3M740.5 202v3M741.5 176v29M742.5 176v11M742.5 195v3M742.5 202v3M743.5 173v14M744.5 173v16M745.5 173v16M746.5 173v16M746.5 198v3M747.5 173v3M747.5 178v23M748.5 178v6M748.5 193v8M749.5 174v3M749.5 178v21M750.5 174v25M751.5 174v14M752.5 173v15M753.5 173v10M753.5 185v3M754.5 173v12M755.5 173v12M756.5 175v13M757.5 175v13M758.5 174v14M759.5 174v13M760.5 173v15M760.5 191v3M761.5 173v21M762.5 173v15M762.5 191v3M763.5 175v13M763.5 189v3M764.5 174v18M765.5 174v18M766.5 173v19M767.5 173v20M768.5 173v20M769.5 173v16M769.5 190v3M770.5 175v14M771.5 175v17M772.5 174v18M773.5 174v14M773.5 189v3M774.5 174v14M775.5 174v9M775.5 184v3M775.5 192v3M776.5 173v22M777.5 173v14M777.5 192v3M778.5 173v8M778.5 182v6M778.5 193v3M779.5 173v23M780.5 174v18M780.5 193v3M780.5 198v3M781.5 173v28M782.5 173v16M782.5 198v3M783.5 173v9M783.5 185v4M783.5 205v3M784.5 173v35M785.5 173v18M785.5 196v3M785.5 205v3M786.5 173v26M787.5 175v12M787.5 188v3M787.5 196v3M788.5 175v16M789.5 176v10M789.5 188v3M790.5 176v13M791.5 176v15M792.5 176v15M793.5 173v18M794.5 173v15M794.5 200v3M795.5 173v30M796.5 173v25M796.5 200v3M797.5 173v17M798.5 173v11M798.5 185v3M799.5 173v7M799.5 181v6M799.5 198v3M800.5 173v28M801.5 173v28M802.5 176v23M803.5 173v11M803.5 193v6M804.5 173v23M805.5 173v11M805.5 185v3M805.5 193v3M806.5 173v15M806.5 195v3M807.5 173v25M808.5 177v16M808.5 195v3M809.5 174v17M810.5 174v16M810.5 194v3M811.5 174v23M812.5 174v3M812.5 178v12M812.5 194v3M813.5 174v3M813.5 178v19M814.5 174v18M814.5 194v3M815.5 174v14M815.5 201v3M816.5 173v31M817.5 173v14M817.5 195v3M817.5 201v3M818.5 173v25M819.5 173v20M819.5 195v3M820.5 173v16M820.5 190v3M821.5 174v16M822.5 174v16M823.5 174v16M824.5 174v12M824.5 191v3M825.5 174v20M826.5 177v11M826.5 191v3M827.5 177v11M828.5 176v12M828.5 189v3M829.5 174v20M830.5 174v20M831.5 174v20M832.5 175v3M832.5 179v13M833.5 175v17M834.5 174v17M835.5 174v16M836.5 173v17M837.5 173v13M837.5 189v3M838.5 173v19M838.5 201v3M839.5 176v28M840.5 176v13M840.5 200v4M841.5 176v27M842.5 175v20M842.5 200v3M843.5 175v15M843.5 194v3M844.5 175v22M845.5 174v16M845.5 194v3M846.5 173v17M847.5 173v17M848.5 173v18M849.5 174v18M850.5 174v18M851.5 174v18M852.5 175v15M853.5 175v13M853.5 207v3M854.5 175v35M855.5 175v14M855.5 207v3M856.5 175v14M857.5 175v14M857.5 192v3M858.5 175v20M859.5 173v3M859.5 177v11M859.5 192v3M860.5 173v9M860.5 185v3"/>
</g>
<g font-size="12.6" fill="#262626">
<text x="63" y="111.1" text-anchor="end">100</text>
<text x="63" y="178.7" text-anchor="end">0</text>
<text x="63" y="246.2" text-anchor="end">-100</text>
<text x="63" y="313.8" text-anchor="end">-200</text>
<text x="63" y="381.3" text-anchor="end">-300</text>
<text x="63" y="448.9" text-anchor="end">-400</text>
<text x="63" y="516.4" text-anchor="end">-500</text>
<text x="63" y="584.0" text-anchor="end">-600</text>
<text x="63" y="651.6" text-anchor="end">-700</text>
<text x="63" y="719.1" text-anchor="end">-800</text>
<text x="66.7" y="731" text-anchor="middle">0</text>
<text x="224.1" y="731" text-anchor="middle">500</text>
<text x="381.5" y="731" text-anchor="middle">1000</text>
<text x="538.9" y="731" text-anchor="middle">1500</text>
<text x="696.3" y="731" text-anchor="middle">2000</text>
<text x="853.7" y="731" text-anchor="middle">2500</text>
<text x="464" y="746" text-anchor="middle" font-size="13.3">Episode Number</text>
<text transform="translate(33,411.5) rotate(-90)" text-anchor="middle" font-size="12.9">Episode Reward</text>
</g>
<text x="464" y="102" text-anchor="middle" font-size="13.05" font-weight="bold" fill="#1a1a1a">Episode reward for rlLKAMdl with rlDQNAgent</text>
</svg>

  <!-- right panel -->
  <div class="abs" style="left:899px;top:69px;width:156px;height:15px;background:#fff;"></div>
  <div class="abs" style="left:899px;top:69px;width:37px;height:15px;background:#0072bd;"></div>
  <div class="btn" style="left:1065px;top:64px;width:110px;height:25px;line-height:22px;color:#a0a0a0;border-color:#c0c0c0;">Training stopped</div>

  <div class="lbl" style="left:899px;top:100px;">Episode number:</div>
  <div class="lbl" style="left:1027px;top:100px;">2518/10000</div>
  <div class="lbl" style="left:899px;top:125px;">Start time:</div>
  <div class="lbl" style="left:1027px;top:125px;">16-Dec-2022 14:38:15</div>
  <div class="lbl" style="left:899px;top:150px;">Duration:</div>
  <div class="lbl" style="left:1027px;top:150px;">01:00:52</div>
  <div class="lbl" style="left:899px;top:175px;">Final result:</div>
  <div class="lbl" style="left:1027px;top:174px;line-height:15px;white-space:normal;width:140px;">Training finished after all agents reached stop training criteria.</div>

  <div class="panel" style="left:899px;top:230px;width:276px;height:270px;">
    <div class="phead"></div>
  </div>
  <div class="lbl b" style="left:903px;top:233px;">Training Information</div>
  <!-- table -->
  <div class="abs" style="left:910px;top:261px;width:254px;height:95px;border:1px solid #7a7a7a;box-sizing:border-box;background:#fff;"></div>
  <div class="abs" style="left:911px;top:262px;width:252px;height:27px;background:#f5f5f5;border-bottom:1px solid #9a9a9a;box-sizing:border-box;"></div>
  <div class="abs" style="left:911px;top:289px;width:252px;height:23px;background:#0072bd;"></div>
  <div class="abs" style="left:1037px;top:262px;width:1px;height:50px;background:#8a8a8a;"></div>
  <div class="lbl b" style="left:914px;top:268px;">Agent</div>
  <div class="lbl b" style="left:1041px;top:268px;">Status</div>
  <div class="lbl" style="left:914px;top:292px;color:#fff;">rlDQNAgent</div>
  <div class="lbl" style="left:1041px;top:292px;color:#fff;">Training finished</div>

  <div class="lbl b" style="left:910px;top:367px;">Episode Information (rlDQNAgent):</div>
  <div class="lbl" style="left:910px;top:392px;">Episode reward:</div>
  <div class="lbl" style="left:1028px;top:392px;">-0.87071</div>
  <div class="lbl" style="left:910px;top:417px;">Average reward:</div>
  <div class="lbl" style="left:1028px;top:417px;">-9.3154</div>
  <div class="lbl" style="left:910px;top:442px;">Episode Q0:</div>
  <div class="lbl" style="left:1028px;top:442px;">0.045365</div>
  <div class="btn" style="left:1054px;top:466px;width:110px;height:23px;line-height:20px;color:#1a1a1a;">More Details...</div>

  <div class="panel" style="left:899px;top:510px;width:276px;height:89px;">
    <div class="phead"></div>
  </div>
  <div class="lbl b" style="left:903px;top:513px;">Plot Options</div>
  <div class="cb" style="left:910px;top:541px;"></div>
  <svg class="abs" style="left:910px;top:541px" width="14" height="14" viewBox="0 0 14 14"><path d="M2.800 7.200 L5.600 10 L11.200 3.600" stroke="#1a1a1a" stroke-width="2" fill="none"/></svg>
  <div class="lbl" style="left:927px;top:541px;">Show EpisodeQ0</div>
  <div class="cb" style="left:910px;top:570px;"></div>
  <div class="lbl" style="left:927px;top:569px;">Show last N episodes</div>
  <div class="abs" style="left:1054px;top:566px;width:110px;height:22px;border:1px solid #c8c8c8;box-sizing:border-box;background:#f5f5f5;"></div>
  <div class="lbl" style="left:1054px;top:570px;width:105px;text-align:right;color:#a8a8a8;">1e+04</div>

  <!-- legend -->
  <div class="panel" style="left:899px;top:609px;width:276px;height:57px;"></div>
  <div class="abs" style="left:905px;top:615px;width:264px;height:45px;background:#fff;"></div>
  <svg class="abs" style="left:905px;top:615px" width="264" height="45" viewBox="0 0 264 45">
    <path d="M7 14.500 H47" stroke="#a6dbf5" stroke-width="1"/><rect x="25" y="13" width="3" height="3" fill="#a6dbf5"/>
    <path d="M7 28.500 H47" stroke="#0072bd" stroke-width="1"/><rect x="25" y="27" width="3" height="3" fill="#0072bd"/>
    <path d="M145 14.500 H185" stroke="#edb120" stroke-width="1"/><rect x="163" y="13" width="3" height="3" fill="#edb120"/>
  </svg>
  <div class="lbl" style="left:955px;top:622px;font-size:12.3px;">Episode reward</div>
  <div class="lbl" style="left:955px;top:637px;font-size:12.3px;">Average reward</div>
  <div class="lbl" style="left:1093px;top:622px;font-size:12.3px;">Episode Q0</div>

  <!-- window border -->
  <div class="abs" style="left:0;top:0;width:1186px;height:1px;background:#1b2a3a;"></div>
  <div class="abs" style="left:0;top:0;width:1px;height:793px;background:#2a2a2a;"></div>
  <div class="abs" style="left:1185px;top:0;width:1px;height:793px;background:#3a3a3a;"></div>
  <div class="abs" style="left:0;top:792px;width:1186px;height:1px;background:#4a4a4a;"></div>
</div>
</body>
</html>
